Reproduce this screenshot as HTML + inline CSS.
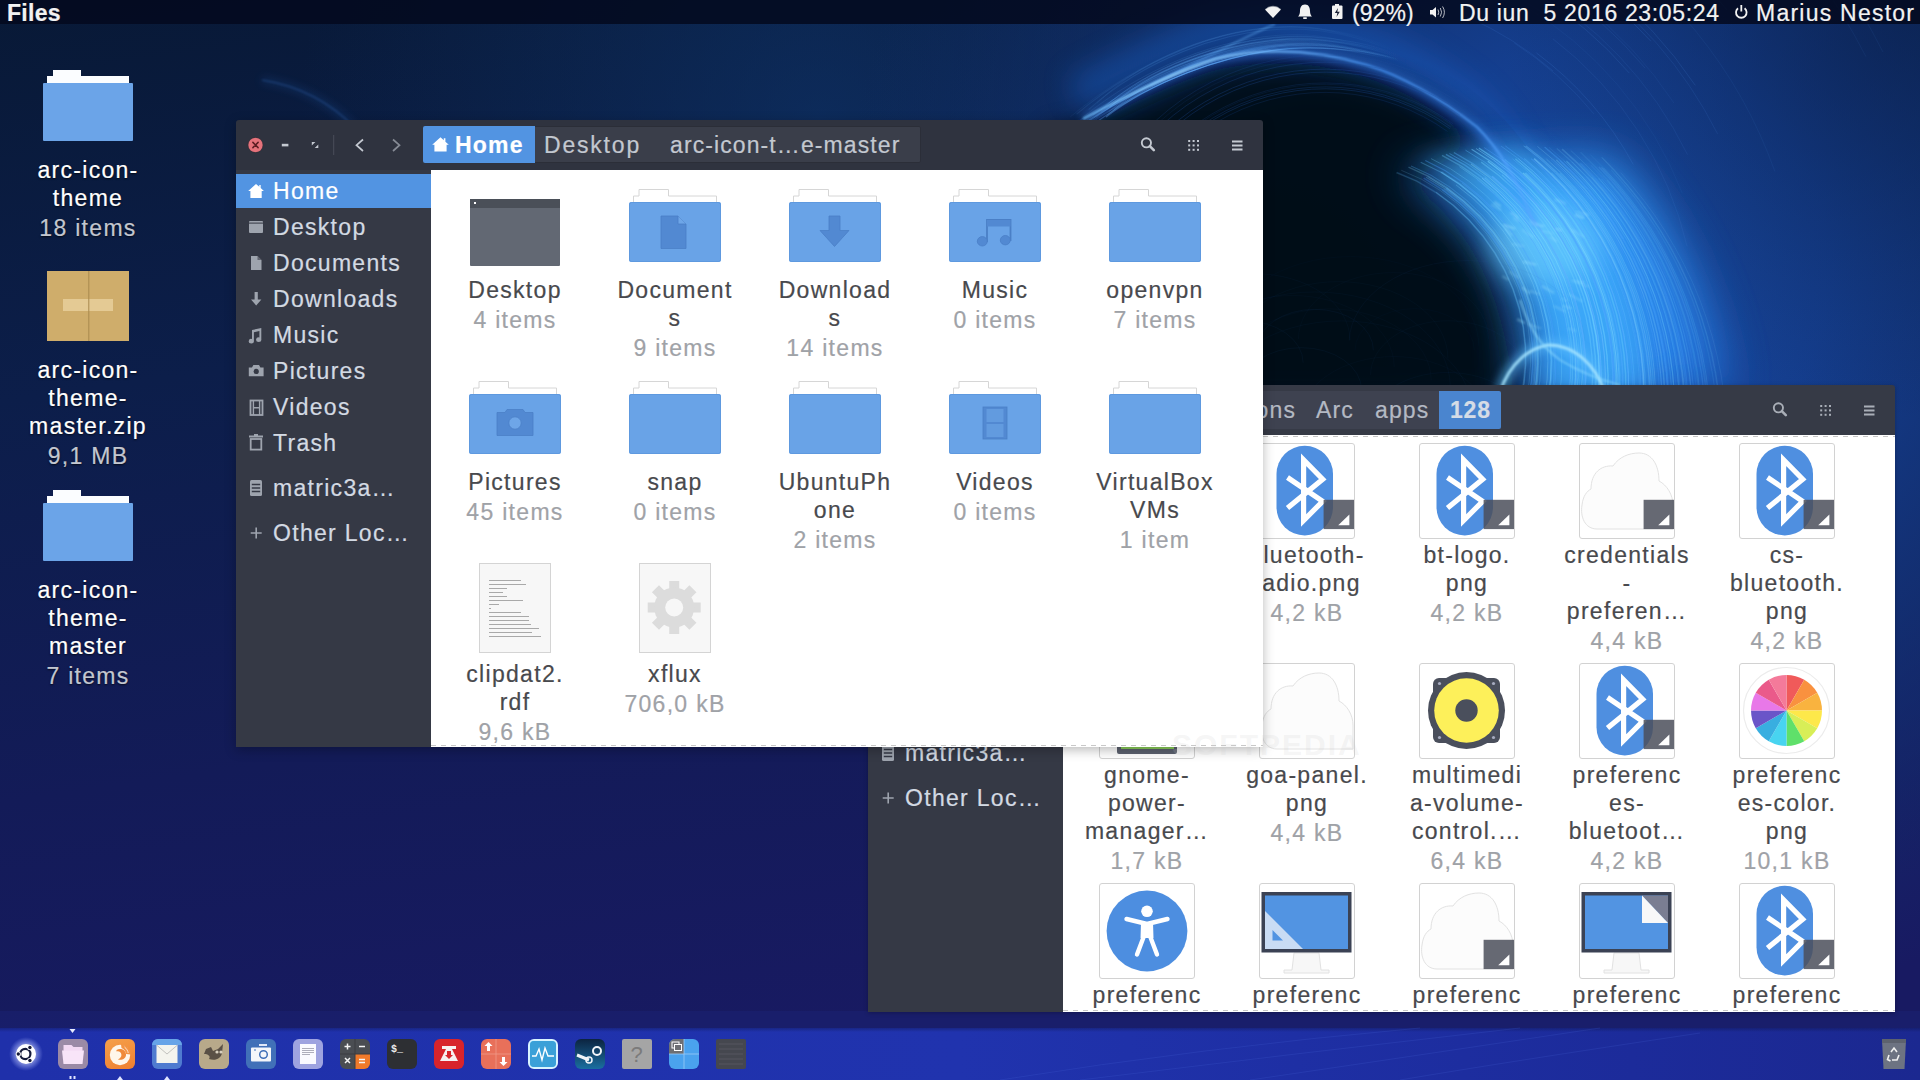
<!DOCTYPE html><html><head><meta charset="utf-8"><title>Files</title><style>
*{margin:0;padding:0;box-sizing:border-box}
html,body{width:1920px;height:1080px;overflow:hidden;background:#0e1d4a;font-family:"Liberation Sans",sans-serif}
.lbl,.si,.dl,.pt,#panel div{-webkit-text-stroke:0.2px currentColor}
.a{position:absolute}
svg.a{overflow:visible}
#panel{left:0;top:0;width:1920px;height:24px;background:rgba(3,9,30,0.86);color:#f2f2f2;font-size:23px;line-height:26px;white-space:nowrap}
.win{position:absolute;overflow:hidden;border-radius:3px 3px 0 0}
.hdr{position:absolute;left:0;top:0;width:100%;height:50px;background:#2f333f}
.side{position:absolute;left:0;top:50px;width:195px;bottom:0;background:#353945}
.cont{position:absolute;left:195px;top:50px;right:0;bottom:0;background:#ffffff;overflow:hidden}
.si{position:absolute;left:0;width:195px;height:34px;color:#d3dae3;font-size:23px;line-height:34px;letter-spacing:1.3px;white-space:nowrap}
.si .t{position:absolute;left:37px;top:0}
.si.sel{background:#5294e2;color:#fff}
.lbl{position:absolute;width:160px;text-align:center;font-size:23px;line-height:28px;letter-spacing:1.3px;color:#48494d;white-space:nowrap}
.cnt{color:#9fa2a7}
.dl{position:absolute;width:176px;text-align:center;font-size:23px;line-height:28px;letter-spacing:1.3px;color:#ffffff;white-space:nowrap;text-shadow:0 1px 2px rgba(0,0,0,.7)}
.dl .cnt{color:#c3c7d0}
.pt{position:absolute;top:6px;line-height:38px;font-size:23px;letter-spacing:1.1px;white-space:nowrap}
.di{position:absolute;top:1039px;width:30px;height:30px;border-radius:6px;overflow:hidden}
</style></head><body><svg class="a" style="left:0;top:0" width="1920" height="1080" viewBox="0 0 1920 1080">
<defs>
<linearGradient id="bg" x1="0" y1="0" x2="0.25" y2="1">
<stop offset="0" stop-color="#081936"/><stop offset="0.35" stop-color="#0c1e4a"/><stop offset="0.7" stop-color="#131b58"/><stop offset="1" stop-color="#181a62"/>
</linearGradient>
<radialGradient id="rg" cx="1600" cy="270" r="760" gradientUnits="userSpaceOnUse">
<stop offset="0" stop-color="#1a4ca4" stop-opacity="1"/><stop offset="0.3" stop-color="#154092" stop-opacity="0.95"/><stop offset="0.6" stop-color="#12367a" stop-opacity="0.7"/><stop offset="1" stop-color="#12306e" stop-opacity="0"/>
</radialGradient>
<radialGradient id="tl" cx="820" cy="120" r="520" gradientUnits="userSpaceOnUse">
<stop offset="0" stop-color="#0e3368" stop-opacity="0.65"/><stop offset="1" stop-color="#0e3060" stop-opacity="0"/>
</radialGradient>
<radialGradient id="dk" cx="1330" cy="310" r="265" gradientUnits="userSpaceOnUse">
<stop offset="0" stop-color="#01030b" stop-opacity="1"/><stop offset="0.75" stop-color="#020817" stop-opacity="0.96"/><stop offset="1" stop-color="#05102c" stop-opacity="0"/>
</radialGradient>
<linearGradient id="cr" x1="1420" y1="160" x2="1720" y2="390" gradientUnits="userSpaceOnUse">
<stop offset="0" stop-color="#2a80ea"/><stop offset="0.35" stop-color="#36a2ff"/><stop offset="1" stop-color="#2476e0"/>
</linearGradient>
<linearGradient id="rimg" x1="1080" y1="0" x2="1540" y2="0" gradientUnits="userSpaceOnUse">
<stop offset="0" stop-color="#6ec0ff" stop-opacity="0.9"/><stop offset="0.2" stop-color="#9ad8ff" stop-opacity="1"/><stop offset="0.65" stop-color="#4a9aff" stop-opacity="0.75"/><stop offset="1" stop-color="#5aaaff" stop-opacity="0.7"/>
</linearGradient>
<linearGradient id="lbg" x1="1060" y1="0" x2="1400" y2="0" gradientUnits="userSpaceOnUse"><stop offset="0" stop-color="#6ab8ff" stop-opacity="0.6"/><stop offset="0.4" stop-color="#6ab8ff" stop-opacity="1"/><stop offset="1" stop-color="#6ab8ff" stop-opacity="0"/></linearGradient>
<radialGradient id="trd" cx="1920" cy="0" r="420" gradientUnits="userSpaceOnUse"><stop offset="0" stop-color="#0a1f4a" stop-opacity="0.7"/><stop offset="1" stop-color="#0a1f4a" stop-opacity="0"/></radialGradient>
<filter id="b24" x="-50%" y="-50%" width="200%" height="200%"><feGaussianBlur stdDeviation="24"/></filter>
<filter id="b14" x="-50%" y="-50%" width="200%" height="200%"><feGaussianBlur stdDeviation="14"/></filter>
<filter id="b8" x="-50%" y="-50%" width="200%" height="200%"><feGaussianBlur stdDeviation="8"/></filter>
<filter id="b4" x="-50%" y="-50%" width="200%" height="200%"><feGaussianBlur stdDeviation="4"/></filter>
<filter id="b1" x="-50%" y="-50%" width="200%" height="200%"><feGaussianBlur stdDeviation="0.8"/></filter>
</defs>
<rect width="1920" height="1080" fill="url(#bg)"/>
<rect width="1920" height="1080" fill="url(#tl)"/>
<rect width="1920" height="1080" fill="url(#rg)"/>
<rect width="1920" height="1080" fill="url(#trd)"/>
<ellipse cx="1325" cy="315" rx="255" ry="275" fill="url(#dk)" opacity="0.8"/>
<path d="M1075 132 C1130 104 1175 82 1215 70 C1260 60 1310 60 1362 76 C1400 88 1440 110 1470 140 C1455 160 1430 170 1405 180 C1475 225 1505 300 1515 400 L1050 400 L1050 132 Z" fill="#020817" opacity="0.9" filter="url(#b14)"/>
<path d="M1083 119 C1130 94 1175 72 1215 59 C1260 48 1310 48 1367 65 C1405 77 1440 98 1477 127 C1500 150 1515 175 1535 226" fill="none" stroke="#1f64cc" stroke-width="36" opacity="0.42" filter="url(#b14)" transform="translate(-8,-24)"/><path d="M1094.2 117.6 C1147.1 76.3 1220.0 46.3 1290.0 42.2 C1330.0 40.2 1352.9 49.1 1400.0 59.1" fill="none" stroke="url(#lbg)" stroke-width="0.98" opacity="0.25"/><path d="M1085.0 121.4 C1146.7 75.1 1220.0 45.0 1290.0 41.2 C1330.0 39.3 1351.5 48.5 1400.0 58.7" fill="none" stroke="url(#lbg)" stroke-width="0.90" opacity="0.23"/><path d="M1084.4 127.4 C1149.4 83.1 1220.0 53.9 1290.0 48.3 C1330.0 45.5 1383.1 53.0 1400.0 61.4" fill="none" stroke="url(#lbg)" stroke-width="0.69" opacity="0.29"/><path d="M1113.5 109.9 C1148.0 79.0 1220.0 49.3 1290.0 44.6 C1330.0 42.3 1373.1 50.7 1400.0 60.0" fill="none" stroke="url(#lbg)" stroke-width="0.88" opacity="0.36"/><path d="M1096.9 103.5 C1141.2 58.6 1220.0 26.7 1290.0 26.6 C1330.0 26.5 1361.6 39.4 1400.0 53.2" fill="none" stroke="url(#lbg)" stroke-width="0.70" opacity="0.12"/><path d="M1107.2 115.1 C1148.9 81.8 1220.0 52.5 1290.0 47.2 C1330.0 44.5 1357.2 52.2 1400.0 60.9" fill="none" stroke="url(#lbg)" stroke-width="1.01" opacity="0.33"/><path d="M1083.3 116.9 C1144.2 67.7 1220.0 36.8 1290.0 34.7 C1330.0 33.6 1352.5 44.4 1400.0 56.2" fill="none" stroke="url(#lbg)" stroke-width="0.64" opacity="0.21"/><path d="M1082.6 125.7 C1148.1 79.4 1220.0 49.8 1290.0 45.1 C1330.0 42.7 1362.6 50.9 1400.0 60.1" fill="none" stroke="url(#lbg)" stroke-width="1.01" opacity="0.38"/><path d="M1100.9 111.7 C1145.9 72.8 1220.0 42.4 1290.0 39.1 C1330.0 37.5 1378.0 47.2 1400.0 57.9" fill="none" stroke="url(#lbg)" stroke-width="0.77" opacity="0.25"/><path d="M1103.9 107.9 C1144.8 69.5 1220.0 38.8 1290.0 36.2 C1330.0 34.9 1379.2 45.4 1400.0 56.8" fill="none" stroke="url(#lbg)" stroke-width="0.80" opacity="0.24"/><path d="M1070.4 116.7 C1141.2 58.5 1220.0 26.6 1290.0 26.5 C1330.0 26.4 1380.3 39.3 1400.0 53.2" fill="none" stroke="url(#lbg)" stroke-width="0.71" opacity="0.12"/><path d="M1092.8 115.1 C1145.6 71.8 1220.0 41.3 1290.0 38.3 C1330.0 36.7 1380.6 46.7 1400.0 57.6" fill="none" stroke="url(#lbg)" stroke-width="1.00" opacity="0.21"/><path d="M1088.6 109.6 C1142.1 61.4 1220.0 29.7 1290.0 29.0 C1330.0 28.6 1373.8 40.9 1400.0 54.1" fill="none" stroke="url(#lbg)" stroke-width="1.01" opacity="0.15"/><path d="M1109.8 107.2 C1145.9 72.7 1220.0 42.3 1290.0 39.1 C1330.0 37.4 1369.0 47.2 1400.0 57.9" fill="none" stroke="url(#lbg)" stroke-width="1.06" opacity="0.32"/><path d="M1097.9 120.9 C1149.5 83.4 1220.0 54.2 1290.0 48.5 C1330.0 45.7 1389.7 53.1 1400.0 61.5" fill="none" stroke="url(#lbg)" stroke-width="1.18" opacity="0.43"/><path d="M1095.9 117.5 C1147.4 77.3 1220.0 47.5 1290.0 43.2 C1330.0 41.0 1350.9 49.7 1400.0 59.4" fill="none" stroke="url(#lbg)" stroke-width="0.92" opacity="0.30"/><path d="M1061.0 137.2 C1148.5 80.5 1220.0 51.0 1290.0 46.0 C1330.0 43.5 1380.7 51.5 1400.0 60.5" fill="none" stroke="url(#lbg)" stroke-width="0.69" opacity="0.28"/><path d="M1108.6 111.9 C1147.8 78.3 1220.0 48.6 1290.0 44.1 C1330.0 41.8 1353.2 50.3 1400.0 59.8" fill="none" stroke="url(#lbg)" stroke-width="0.91" opacity="0.31"/><path d="M1100.9 109.8 C1145.1 70.2 1220.0 39.5 1290.0 36.8 C1330.0 35.5 1384.6 45.8 1400.0 57.1" fill="none" stroke="url(#lbg)" stroke-width="0.79" opacity="0.29"/><path d="M1106.8 109.5 C1146.3 73.8 1220.0 43.5 1290.0 40.0 C1330.0 38.3 1388.3 47.8 1400.0 58.3" fill="none" stroke="url(#lbg)" stroke-width="0.71" opacity="0.26"/><path d="M1071.4 131.9 C1148.4 80.2 1220.0 50.7 1290.0 45.8 C1330.0 43.3 1369.4 51.4 1400.0 60.4" fill="none" stroke="url(#lbg)" stroke-width="1.01" opacity="0.30"/><path d="M1081.2 125.3 C1147.6 77.9 1220.0 48.1 1290.0 43.7 C1330.0 41.5 1364.8 50.1 1400.0 59.6" fill="none" stroke="url(#lbg)" stroke-width="1.00" opacity="0.24"/><path d="M1076.6 114.1 C1141.4 59.3 1220.0 27.4 1290.0 27.1 C1330.0 27.0 1374.7 39.7 1400.0 53.4" fill="none" stroke="url(#lbg)" stroke-width="1.07" opacity="0.14"/><path d="M1106.0 117.0 C1149.5 83.5 1220.0 54.4 1290.0 48.7 C1330.0 45.9 1385.0 53.2 1400.0 61.5" fill="none" stroke="url(#lbg)" stroke-width="1.16" opacity="0.48"/><path d="M1060.3 133.2 C1146.5 74.4 1220.0 44.2 1290.0 40.6 C1330.0 38.8 1375.4 48.1 1400.0 58.5" fill="none" stroke="url(#lbg)" stroke-width="0.64" opacity="0.28"/><path d="M1068.7 135.3 C1149.4 83.2 1220.0 54.0 1290.0 48.4 C1330.0 45.6 1363.6 53.0 1400.0 61.4" fill="none" stroke="url(#lbg)" stroke-width="0.64" opacity="0.32"/><path d="M1150 86 C1190 66 1230 44 1275 24" fill="none" stroke="#6ab8ff" stroke-width="1.5" opacity="0.55" filter="url(#b1)"/><path d="M1609.4 159.5 L1620.5 171.3 L1631.2 183.6 L1641.6 196.2 L1651.4 209.3 L1660.7 222.7 L1669.5 236.6 L1677.8 250.8 L1685.5 265.4 L1692.7 280.3 L1699.2 295.6 L1705.1 311.1 L1710.4 326.9 L1715.1 343.0 L1719.1 359.2 L1722.4 375.7 L1725.0 392.4 L1520.0 400.0 L1520.0 400.0 L1523.1 384.9 L1524.8 369.2 L1525.2 353.0 L1524.1 336.6 L1521.5 320.0 L1517.4 303.4 L1511.8 287.0 L1504.6 270.9 L1495.9 255.2 L1485.6 240.2 L1474.0 225.9 L1460.9 212.6 L1446.5 200.4 L1430.8 189.4 L1414.1 180.1 L1396.3 172.7 Z" fill="url(#cr)" filter="url(#b24)" opacity="0.95"/><path d="M1520.9 145.8 L1535.4 157.0 L1549.1 169.2 L1562.0 182.1 L1574.2 195.8 L1585.4 210.1 L1595.8 225.0 L1605.3 240.5 L1613.8 256.4 L1621.4 272.7 L1628.1 289.4 L1633.7 306.4 L1638.4 323.6 L1642.0 341.0 L1644.7 358.5 L1646.4 376.0 L1647.0 393.6 L1544.5 398.4 L1546.8 382.4 L1547.8 365.9 L1547.5 349.2 L1545.8 332.3 L1542.7 315.4 L1538.1 298.5 L1532.1 281.8 L1524.6 265.4 L1515.8 249.5 L1505.5 234.2 L1493.9 219.6 L1481.0 205.9 L1466.8 193.2 L1451.5 181.8 L1435.0 171.7 L1417.6 163.4 Z" fill="#45b8ff" filter="url(#b14)" opacity="0.6"/><ellipse cx="1545" cy="245" rx="55" ry="40" fill="#7fdcff" filter="url(#b14)" opacity="0.45"/><path d="M1396.3 172.7 L1416.6 181.3 L1435.5 192.4 L1452.8 205.4 L1468.6 220.0 L1482.5 236.0 L1494.5 253.0 L1504.6 270.9 L1512.7 289.3 L1518.8 308.2 L1522.9 327.1 L1525.0 346.0 L1525.1 364.6 L1523.4 382.7 L1520.0 400.0" fill="none" stroke="#8fe0ff" stroke-width="1.15" opacity="0.17"/><path d="M1408.5 167.1 L1428.6 176.3 L1447.3 187.8 L1464.5 201.2 L1480.1 216.1 L1494.0 232.3 L1506.1 249.5 L1516.3 267.5 L1524.5 286.2 L1530.9 305.2 L1535.3 324.4 L1537.8 343.6 L1538.4 362.5 L1537.3 381.1 L1534.3 399.0" fill="none" stroke="#8fe0ff" stroke-width="1.46" opacity="0.23"/><path d="M1533.6 158.6 L1549.2 172.7 L1563.8 187.7 L1577.2 203.7 L1589.6 220.6 L1600.7 238.1 L1610.6 256.3 L1619.2 275.0 L1626.5 294.2 L1632.5 313.8 L1637.2 333.6 L1640.6 353.6 L1642.6 373.6 L1643.4 393.7" fill="none" stroke="#4aa0ff" stroke-width="1.49" opacity="0.25"/><path d="M1504.8 159.4 L1521.4 173.0 L1536.8 187.9 L1551.0 203.8 L1563.9 220.7 L1575.4 238.3 L1585.6 256.7 L1594.2 275.6 L1601.5 295.0 L1607.2 314.8 L1611.5 334.7 L1614.3 354.8 L1615.6 374.8 L1615.4 394.7" fill="none" stroke="#6fd0ff" stroke-width="1.27" opacity="0.32"/><path d="M1563.7 160.7 L1578.2 175.0 L1591.8 190.1 L1604.5 206.0 L1616.1 222.6 L1626.7 239.9 L1636.3 257.7 L1644.8 276.1 L1652.2 294.8 L1658.4 314.0 L1663.5 333.5 L1667.4 353.2 L1670.1 373.0 L1671.7 393.0" fill="none" stroke="#6fd0ff" stroke-width="0.78" opacity="0.22"/><path d="M1611.2 169.9 L1623.8 184.1 L1635.8 198.9 L1647.0 214.3 L1657.6 230.2 L1667.4 246.6 L1676.4 263.5 L1684.6 280.9 L1691.9 298.6 L1698.4 316.8 L1703.9 335.3 L1708.6 354.1 L1712.4 373.2 L1715.2 392.4" fill="none" stroke="#6fd0ff" stroke-width="1.28" opacity="0.10"/><path d="M1470.9 164.0 L1488.6 176.9 L1504.9 191.3 L1519.9 206.9 L1533.3 223.6 L1545.2 241.2 L1555.5 259.6 L1564.1 278.5 L1571.1 297.9 L1576.4 317.6 L1580.0 337.5 L1581.9 357.3 L1582.3 376.9 L1581.0 396.3" fill="none" stroke="#8fe0ff" stroke-width="1.07" opacity="0.33"/><path d="M1601.3 167.4 L1614.3 181.7 L1626.6 196.6 L1638.2 212.1 L1649.0 228.2 L1658.9 244.8 L1668.1 261.9 L1676.3 279.5 L1683.7 297.6 L1690.1 316.0 L1695.6 334.7 L1700.1 353.8 L1703.6 373.0 L1706.2 392.5" fill="none" stroke="#8fe0ff" stroke-width="1.17" opacity="0.10"/><path d="M1551.5 172.7 L1566.0 187.8 L1579.4 203.8 L1591.6 220.7 L1602.7 238.2 L1612.6 256.4 L1621.2 275.1 L1628.5 294.2 L1634.6 313.7 L1639.3 333.5 L1642.7 353.5 L1644.8 373.6 L1645.6 393.6" fill="none" stroke="#58b8ff" stroke-width="1.33" opacity="0.33"/><path d="M1594.9 177.6 L1607.9 192.6 L1620.1 208.4 L1631.3 224.8 L1641.6 241.8 L1651.0 259.3 L1659.4 277.4 L1666.8 295.8 L1673.1 314.7 L1678.4 333.9 L1682.6 353.3 L1685.7 372.9 L1687.7 392.7" fill="none" stroke="#4aa0ff" stroke-width="0.92" opacity="0.14"/><path d="M1401.3 170.3 L1421.5 179.2 L1440.3 190.5 L1457.6 203.6 L1473.3 218.4 L1487.2 234.4 L1499.2 251.5 L1509.4 269.4 L1517.6 288.0 L1523.7 306.9 L1528.0 326.0 L1530.2 345.0 L1530.6 363.7 L1529.1 382.0 L1525.9 399.6" fill="none" stroke="#8fe0ff" stroke-width="0.77" opacity="0.20"/><path d="M1534.2 158.6 L1549.8 172.7 L1564.3 187.8 L1577.8 203.8 L1590.1 220.6 L1601.2 238.1 L1611.1 256.3 L1619.7 275.0 L1627.0 294.2 L1633.1 313.8 L1637.8 333.6 L1641.2 353.6 L1643.2 373.6 L1644.0 393.7" fill="none" stroke="#8fe0ff" stroke-width="1.46" opacity="0.35"/><path d="M1465.5 150.2 L1484.1 161.7 L1501.4 174.9 L1517.4 189.5 L1532.0 205.3 L1545.3 222.1 L1557.1 239.7 L1567.3 258.1 L1576.0 277.1 L1583.1 296.5 L1588.5 316.3 L1592.4 336.2 L1594.7 356.1 L1595.4 376.0 L1594.6 395.6" fill="none" stroke="#58b8ff" stroke-width="0.90" opacity="0.40"/><path d="M1524.7 172.8 L1540.1 187.7 L1554.2 203.7 L1567.0 220.5 L1578.5 238.2 L1588.6 256.6 L1597.3 275.5 L1604.5 294.9 L1610.3 314.6 L1614.6 334.5 L1617.5 354.6 L1618.9 374.6 L1618.8 394.6" fill="none" stroke="#6fd0ff" stroke-width="1.03" opacity="0.42"/><path d="M1559.8 173.2 L1574.0 188.3 L1587.2 204.3 L1599.2 221.1 L1610.2 238.5 L1620.0 256.6 L1628.5 275.2 L1635.9 294.3 L1642.0 313.7 L1646.9 333.4 L1650.4 353.3 L1652.7 373.4 L1653.8 393.4" fill="none" stroke="#6fd0ff" stroke-width="1.42" opacity="0.22"/><path d="M1587.2 176.3 L1600.5 191.4 L1612.8 207.2 L1624.3 223.7 L1634.7 240.8 L1644.2 258.5 L1652.6 276.7 L1660.0 295.3 L1666.3 314.3 L1671.5 333.6 L1675.6 353.2 L1678.5 373.0 L1680.3 392.8" fill="none" stroke="#58b8ff" stroke-width="0.99" opacity="0.17"/><path d="M1524.5 145.8 L1540.8 158.8 L1556.2 173.0 L1570.5 188.1 L1583.8 204.1 L1596.0 220.9 L1607.0 238.4 L1616.8 256.5 L1625.4 275.1 L1632.7 294.2 L1638.8 313.7 L1643.6 333.5 L1647.1 353.4 L1649.3 373.4 L1650.3 393.5" fill="none" stroke="#4aa0ff" stroke-width="1.02" opacity="0.34"/><path d="M1549.0 147.4 L1564.4 160.8 L1578.9 175.1 L1592.4 190.2 L1605.1 206.1 L1616.7 222.7 L1627.3 240.0 L1636.9 257.8 L1645.4 276.1 L1652.7 294.9 L1659.0 314.0 L1664.1 333.5 L1668.0 353.2 L1670.7 373.0 L1672.3 393.0" fill="none" stroke="#58b8ff" stroke-width="0.62" opacity="0.18"/><path d="M1531.1 158.6 L1546.8 172.6 L1561.5 187.7 L1575.0 203.7 L1587.4 220.5 L1598.5 238.1 L1608.4 256.3 L1617.1 275.0 L1624.4 294.2 L1630.4 313.8 L1635.1 333.6 L1638.4 353.6 L1640.4 373.7 L1641.0 393.8" fill="none" stroke="#4aa0ff" stroke-width="1.19" opacity="0.34"/><path d="M1481.2 162.1 L1498.6 175.3 L1514.7 189.8 L1529.4 205.6 L1542.7 222.3 L1554.5 240.0 L1564.8 258.4 L1573.4 277.4 L1580.5 296.8 L1585.9 316.5 L1589.8 336.4 L1592.0 356.4 L1592.6 376.2 L1591.7 395.7" fill="none" stroke="#6fd0ff" stroke-width="1.32" opacity="0.37"/><path d="M1545.1 147.1 L1560.6 160.4 L1575.3 174.6 L1588.9 189.8 L1601.7 205.7 L1613.4 222.3 L1624.1 239.6 L1633.7 257.5 L1642.2 275.9 L1649.6 294.7 L1655.8 313.9 L1660.8 333.4 L1664.7 353.2 L1667.4 373.1 L1668.8 393.1" fill="none" stroke="#58b8ff" stroke-width="0.99" opacity="0.23"/><path d="M1606.4 179.9 L1619.0 194.8 L1630.8 210.5 L1641.8 226.7 L1651.9 243.5 L1661.1 260.8 L1669.4 278.6 L1676.8 296.8 L1683.2 315.4 L1688.6 334.3 L1693.0 353.5 L1696.3 373.0 L1698.7 392.6" fill="none" stroke="#8fe0ff" stroke-width="0.79" opacity="0.10"/><path d="M1528.5 172.7 L1543.7 187.6 L1557.7 203.6 L1570.5 220.4 L1581.9 238.1 L1592.0 256.4 L1600.6 275.3 L1607.9 294.7 L1613.7 314.4 L1618.1 334.3 L1621.0 354.4 L1622.5 374.4 L1622.6 394.4" fill="none" stroke="#4aa0ff" stroke-width="1.35" opacity="0.35"/><path d="M1445.7 188.4 L1462.9 201.7 L1478.5 216.6 L1492.4 232.7 L1504.5 249.9 L1514.7 267.9 L1522.9 286.6 L1529.3 305.6 L1533.6 324.7 L1536.1 343.9 L1536.6 362.8 L1535.4 381.3 L1532.4 399.2" fill="none" stroke="#4aa0ff" stroke-width="1.34" opacity="0.27"/><path d="M1580.5 152.3 L1594.5 165.9 L1607.8 180.2 L1620.3 195.1 L1632.1 210.7 L1643.0 226.9 L1653.1 243.7 L1662.3 261.0 L1670.6 278.7 L1678.0 296.9 L1684.4 315.5 L1689.8 334.4 L1694.2 353.6 L1697.6 373.0 L1700.0 392.5" fill="none" stroke="#6fd0ff" stroke-width="1.39" opacity="0.10"/><path d="M1571.7 161.8 L1585.9 176.1 L1599.3 191.2 L1611.7 207.0 L1623.1 223.5 L1633.6 240.7 L1643.1 258.4 L1651.5 276.6 L1658.9 295.3 L1665.2 314.3 L1670.4 333.6 L1674.4 353.2 L1677.3 373.0 L1679.1 392.8" fill="none" stroke="#58b8ff" stroke-width="0.76" opacity="0.19"/><path d="M1522.9 172.9 L1538.3 187.8 L1552.4 203.7 L1565.3 220.6 L1576.8 238.3 L1586.9 256.6 L1595.6 275.6 L1602.8 295.0 L1608.6 314.7 L1612.9 334.6 L1615.7 354.7 L1617.0 374.7 L1616.9 394.6" fill="none" stroke="#8fe0ff" stroke-width="1.21" opacity="0.42"/><path d="M1518.3 158.7 L1534.5 172.5 L1549.5 187.5 L1563.4 203.5 L1576.0 220.4 L1587.3 238.0 L1597.4 256.3 L1606.0 275.2 L1613.3 294.5 L1619.2 314.1 L1623.7 334.0 L1626.8 354.1 L1628.4 374.2 L1628.7 394.2" fill="none" stroke="#6fd0ff" stroke-width="0.82" opacity="0.41"/><path d="M1484.6 177.6 L1501.0 191.9 L1516.0 207.5 L1529.5 224.2 L1541.5 241.8 L1551.7 260.1 L1560.4 279.1 L1567.3 298.5 L1572.5 318.1 L1576.0 337.9 L1577.9 357.7 L1578.1 377.2 L1576.6 396.5" fill="none" stroke="#6fd0ff" stroke-width="1.28" opacity="0.40"/><path d="M1602.2 167.7 L1615.2 181.9 L1627.5 196.8 L1639.0 212.3 L1649.8 228.3 L1659.7 245.0 L1668.9 262.1 L1677.1 279.7 L1684.4 297.7 L1690.9 316.1 L1696.4 334.8 L1700.9 353.8 L1704.5 373.0 L1707.1 392.5" fill="none" stroke="#58b8ff" stroke-width="1.22" opacity="0.10"/><path d="M1501.9 159.6 L1518.7 173.2 L1534.2 188.0 L1548.4 203.9 L1561.4 220.8 L1572.9 238.5 L1583.1 256.8 L1591.8 275.8 L1599.0 295.2 L1604.7 314.9 L1608.9 334.9 L1611.6 354.9 L1612.8 374.9 L1612.6 394.8" fill="none" stroke="#58b8ff" stroke-width="1.23" opacity="0.42"/><path d="M1607.4 180.1 L1620.0 195.1 L1631.8 210.7 L1642.7 226.9 L1652.8 243.6 L1662.0 260.9 L1670.3 278.7 L1677.7 296.9 L1684.1 315.5 L1689.5 334.4 L1693.9 353.6 L1697.3 373.0 L1699.7 392.5" fill="none" stroke="#58b8ff" stroke-width="1.36" opacity="0.10"/><path d="M1420.7 162.2 L1440.5 172.0 L1459.0 184.0 L1476.0 197.7 L1491.4 212.8 L1505.2 229.2 L1517.3 246.5 L1527.6 264.7 L1536.0 283.5 L1542.5 302.7 L1547.3 322.1 L1550.1 341.5 L1551.2 360.8 L1550.4 379.7 L1548.0 398.1" fill="none" stroke="#6fd0ff" stroke-width="1.20" opacity="0.29"/><path d="M1478.9 148.1 L1497.0 160.1 L1513.9 173.6 L1529.5 188.3 L1543.9 204.2 L1556.9 221.1 L1568.6 238.7 L1578.7 257.1 L1587.4 276.1 L1594.6 295.5 L1600.3 315.2 L1604.4 335.2 L1607.0 355.2 L1608.1 375.2 L1607.7 395.0" fill="none" stroke="#6fd0ff" stroke-width="1.41" opacity="0.39"/><path d="M1462.1 183.1 L1479.0 196.9 L1494.4 212.0 L1508.2 228.5 L1520.2 245.9 L1530.5 264.1 L1539.0 282.9 L1545.6 302.1 L1550.4 321.5 L1553.3 341.0 L1554.5 360.3 L1553.9 379.4 L1551.6 397.9" fill="none" stroke="#58b8ff" stroke-width="0.83" opacity="0.33"/><path d="M1440.6 172.0 L1459.0 184.0 L1476.0 197.7 L1491.5 212.8 L1505.3 229.2 L1517.3 246.5 L1527.6 264.7 L1536.0 283.5 L1542.6 302.7 L1547.3 322.1 L1550.1 341.5 L1551.2 360.8 L1550.5 379.7 L1548.0 398.1" fill="none" stroke="#6fd0ff" stroke-width="0.96" opacity="0.32"/><path d="M1525.7 172.8 L1541.0 187.7 L1555.1 203.6 L1567.9 220.5 L1579.3 238.2 L1589.4 256.5 L1598.1 275.4 L1605.4 294.8 L1611.1 314.5 L1615.5 334.5 L1618.4 354.5 L1619.8 374.6 L1619.8 394.5" fill="none" stroke="#58b8ff" stroke-width="1.24" opacity="0.46"/><path d="M1620.7 172.7 L1632.9 186.8 L1644.6 201.4 L1655.6 216.6 L1665.9 232.3 L1675.5 248.5 L1684.4 265.2 L1692.5 282.3 L1699.8 299.8 L1706.3 317.7 L1712.0 336.0 L1716.8 354.5 L1720.8 373.3 L1723.8 392.4" fill="none" stroke="#8fe0ff" stroke-width="0.89" opacity="0.10"/><path d="M1544.1 147.0 L1559.7 160.3 L1574.4 174.5 L1588.1 189.7 L1600.8 205.6 L1612.6 222.2 L1623.3 239.5 L1632.9 257.4 L1641.4 275.8 L1648.8 294.7 L1655.0 313.9 L1660.0 333.4 L1663.9 353.2 L1666.5 373.1 L1668.0 393.1" fill="none" stroke="#4aa0ff" stroke-width="1.23" opacity="0.22"/><path d="M1488.0 161.1 L1505.2 174.4 L1521.1 189.1 L1535.7 204.9 L1548.9 221.7 L1560.6 239.4 L1570.8 257.8 L1579.5 276.8 L1586.6 296.2 L1592.2 315.9 L1596.1 335.9 L1598.5 355.8 L1599.4 375.7 L1598.7 395.4" fill="none" stroke="#6fd0ff" stroke-width="0.70" opacity="0.42"/><path d="M1590.1 154.4 L1603.6 168.0 L1616.5 182.2 L1628.8 197.1 L1640.3 212.6 L1651.0 228.6 L1660.9 245.2 L1670.0 262.3 L1678.2 279.8 L1685.6 297.8 L1692.0 316.2 L1697.5 334.9 L1702.1 353.8 L1705.7 373.1 L1708.3 392.5" fill="none" stroke="#6fd0ff" stroke-width="0.84" opacity="0.10"/><path d="M1442.1 189.8 L1459.4 203.0 L1475.0 217.8 L1488.9 233.8 L1501.0 251.0 L1511.1 268.9 L1519.3 287.5 L1525.6 306.4 L1529.8 325.6 L1532.2 344.6 L1532.6 363.4 L1531.2 381.7 L1528.1 399.5" fill="none" stroke="#58b8ff" stroke-width="1.34" opacity="0.20"/><path d="M1601.6 178.9 L1614.4 193.9 L1626.3 209.6 L1637.4 225.9 L1647.6 242.7 L1656.9 260.1 L1665.3 278.0 L1672.6 296.4 L1679.0 315.1 L1684.3 334.1 L1688.7 353.4 L1691.9 372.9 L1694.1 392.6" fill="none" stroke="#4aa0ff" stroke-width="0.73" opacity="0.13"/><path d="M1603.8 168.0 L1616.7 182.3 L1628.9 197.1 L1640.4 212.6 L1651.1 228.6 L1661.0 245.2 L1670.1 262.3 L1678.4 279.9 L1685.7 297.8 L1692.1 316.2 L1697.7 334.9 L1702.2 353.8 L1705.8 373.1 L1708.4 392.5" fill="none" stroke="#6fd0ff" stroke-width="0.85" opacity="0.10"/><path d="M1562.1 149.1 L1576.9 162.6 L1590.9 176.9 L1604.0 192.0 L1616.3 207.7 L1627.6 224.2 L1638.0 241.3 L1647.5 258.9 L1655.9 277.0 L1663.2 295.6 L1669.6 314.5 L1674.8 333.7 L1678.9 353.2 L1682.0 372.9 L1683.9 392.8" fill="none" stroke="#8fe0ff" stroke-width="1.44" opacity="0.18"/><path d="M1555.9 173.0 L1570.2 188.1 L1583.5 204.1 L1595.7 220.9 L1606.7 238.4 L1616.5 256.5 L1625.1 275.1 L1632.5 294.2 L1638.5 313.7 L1643.3 333.5 L1646.8 353.4 L1649.0 373.5 L1650.0 393.5" fill="none" stroke="#58b8ff" stroke-width="0.66" opacity="0.23"/><path d="M1591.0 165.2 L1604.5 179.5 L1617.1 194.4 L1629.0 210.1 L1640.0 226.3 L1650.2 243.2 L1659.4 260.5 L1667.7 278.4 L1675.1 296.6 L1681.5 315.3 L1686.9 334.2 L1691.2 353.5 L1694.6 372.9 L1696.8 392.6" fill="none" stroke="#4aa0ff" stroke-width="1.43" opacity="0.11"/><path d="M1445.9 154.4 L1465.0 165.2 L1482.9 178.0 L1499.4 192.2 L1514.4 207.8 L1527.9 224.4 L1539.9 242.0 L1550.2 260.4 L1558.8 279.3 L1565.7 298.7 L1570.9 318.3 L1574.4 338.1 L1576.1 357.8 L1576.3 377.4 L1574.8 396.6" fill="none" stroke="#58b8ff" stroke-width="1.44" opacity="0.40"/><path d="M1602.1 157.4 L1615.1 171.0 L1627.5 185.2 L1639.4 199.9 L1650.5 215.2 L1661.0 231.0 L1670.7 247.3 L1679.7 264.2 L1687.8 281.4 L1695.1 299.1 L1701.6 317.2 L1707.2 335.6 L1712.0 354.3 L1715.8 373.2 L1718.7 392.4" fill="none" stroke="#8fe0ff" stroke-width="1.17" opacity="0.10"/><path d="M1501.1 146.1 L1518.4 158.7 L1534.6 172.5 L1549.6 187.5 L1563.5 203.5 L1576.1 220.4 L1587.4 238.0 L1597.4 256.3 L1606.1 275.2 L1613.4 294.5 L1619.3 314.1 L1623.8 334.0 L1626.8 354.1 L1628.5 374.2 L1628.8 394.2" fill="none" stroke="#58b8ff" stroke-width="0.84" opacity="0.35"/><path d="M1591.8 177.0 L1604.9 192.1 L1617.1 207.9 L1628.4 224.3 L1638.8 241.4 L1648.2 259.0 L1656.6 277.1 L1664.0 295.6 L1670.3 314.5 L1675.6 333.8 L1679.7 353.3 L1682.8 372.9 L1684.7 392.8" fill="none" stroke="#6fd0ff" stroke-width="1.26" opacity="0.14"/><path d="M1505.5 145.9 L1522.6 158.6 L1538.6 172.5 L1553.6 187.5 L1567.3 203.5 L1579.8 220.4 L1591.1 238.0 L1601.1 256.3 L1609.8 275.1 L1617.1 294.4 L1623.0 314.0 L1627.5 333.9 L1630.7 353.9 L1632.5 374.0 L1632.9 394.0" fill="none" stroke="#4aa0ff" stroke-width="0.70" opacity="0.34"/><path d="M1581.2 163.3 L1595.0 177.6 L1608.0 192.7 L1620.2 208.4 L1631.4 224.8 L1641.7 241.8 L1651.1 259.3 L1659.5 277.4 L1666.9 295.9 L1673.2 314.7 L1678.5 333.9 L1682.7 353.3 L1685.8 372.9 L1687.8 392.7" fill="none" stroke="#4aa0ff" stroke-width="1.47" opacity="0.15"/><path d="M1453.9 152.5 L1472.8 163.6 L1490.4 176.6 L1506.7 191.0 L1521.6 206.6 L1535.0 223.3 L1546.9 241.0 L1557.2 259.3 L1565.8 278.3 L1572.8 297.7 L1578.1 317.4 L1581.8 337.3 L1583.8 357.1 L1584.2 376.8 L1583.0 396.2" fill="none" stroke="#58b8ff" stroke-width="1.35" opacity="0.36"/><path d="M1556.3 159.9 L1571.1 174.2 L1584.9 189.3 L1597.8 205.3 L1609.6 221.9 L1620.3 239.3 L1630.0 257.2 L1638.5 275.7 L1645.9 294.6 L1652.1 313.8 L1657.1 333.4 L1660.9 353.2 L1663.4 373.1 L1664.8 393.1" fill="none" stroke="#8fe0ff" stroke-width="1.48" opacity="0.22"/><path d="M1570.8 150.5 L1585.3 164.0 L1598.9 178.3 L1611.8 193.4 L1623.8 209.1 L1635.0 225.4 L1645.2 242.3 L1654.5 259.8 L1662.9 277.8 L1670.3 296.2 L1676.6 314.9 L1681.9 334.0 L1686.2 353.4 L1689.4 372.9 L1691.5 392.6" fill="none" stroke="#8fe0ff" stroke-width="0.99" opacity="0.13"/><path d="M1426.0 177.3 L1444.8 188.8 L1462.0 202.1 L1477.6 216.9 L1491.5 233.0 L1503.6 250.2 L1513.8 268.2 L1522.0 286.8 L1528.3 305.8 L1532.7 324.9 L1535.1 344.1 L1535.6 362.9 L1534.3 381.4 L1531.3 399.2" fill="none" stroke="#8fe0ff" stroke-width="1.14" opacity="0.22"/><path d="M1537.4 146.4 L1553.2 159.7 L1568.1 173.9 L1582.1 189.0 L1595.0 205.0 L1606.9 221.7 L1617.7 239.1 L1627.4 257.0 L1635.9 275.5 L1643.3 294.5 L1649.4 313.8 L1654.4 333.4 L1658.1 353.2 L1660.6 373.2 L1661.9 393.2" fill="none" stroke="#8fe0ff" stroke-width="1.00" opacity="0.21"/><path d="M1482.0 178.2 L1498.5 192.4 L1513.6 207.9 L1527.1 224.6 L1539.1 242.1 L1549.3 260.5 L1558.0 279.4 L1564.9 298.8 L1570.0 318.5 L1573.5 338.2 L1575.3 357.9 L1575.4 377.5 L1573.8 396.6" fill="none" stroke="#8fe0ff" stroke-width="0.82" opacity="0.48"/><path d="M1601.2 157.2 L1614.3 170.8 L1626.8 185.0 L1638.6 199.7 L1649.8 215.0 L1660.3 230.8 L1670.0 247.2 L1679.0 264.0 L1687.1 281.3 L1694.5 299.0 L1701.0 317.1 L1706.6 335.5 L1711.3 354.2 L1715.1 373.2 L1718.0 392.4" fill="none" stroke="#6fd0ff" stroke-width="0.90" opacity="0.10"/><path d="M1411.0 166.0 L1431.0 175.3 L1449.6 187.0 L1466.8 200.5 L1482.4 215.4 L1496.3 231.6 L1508.3 248.9 L1518.5 266.9 L1526.9 285.6 L1533.3 304.6 L1537.7 323.9 L1540.3 343.1 L1541.0 362.2 L1539.9 380.8 L1537.1 398.8" fill="none" stroke="#58b8ff" stroke-width="1.05" opacity="0.27"/><path d="M1397.1 172.3 L1417.4 180.9 L1436.3 192.1 L1453.6 205.1 L1469.3 219.8 L1483.3 235.7 L1495.3 252.8 L1505.4 270.6 L1513.5 289.1 L1519.6 308.0 L1523.7 326.9 L1525.8 345.8 L1526.0 364.4 L1524.4 382.5 L1521.0 400.0" fill="none" stroke="#4aa0ff" stroke-width="1.13" opacity="0.17"/><path d="M1471.6 149.2 L1490.0 160.9 L1507.1 174.2 L1523.0 188.9 L1537.5 204.7 L1550.6 221.5 L1562.3 239.2 L1572.5 257.6 L1581.2 276.6 L1588.4 296.0 L1593.9 315.8 L1597.9 335.7 L1600.4 355.7 L1601.3 375.6 L1600.6 395.3" fill="none" stroke="#6fd0ff" stroke-width="1.13" opacity="0.50"/><path d="M1534.2 172.5 L1549.2 187.5 L1563.1 203.5 L1575.7 220.4 L1587.1 238.0 L1597.1 256.3 L1605.8 275.2 L1613.0 294.5 L1618.9 314.2 L1623.4 334.1 L1626.5 354.1 L1628.1 374.2 L1628.4 394.2" fill="none" stroke="#4aa0ff" stroke-width="1.29" opacity="0.39"/><path d="M1559.4 160.2 L1574.0 174.5 L1587.8 189.6 L1600.5 205.6 L1612.3 222.2 L1623.0 239.5 L1632.6 257.4 L1641.1 275.8 L1648.5 294.7 L1654.7 313.9 L1659.7 333.4 L1663.6 353.2 L1666.2 373.1 L1667.7 393.1" fill="none" stroke="#58b8ff" stroke-width="0.64" opacity="0.20"/><path d="M1598.5 178.3 L1611.4 193.3 L1623.5 209.0 L1634.6 225.4 L1644.9 242.3 L1654.2 259.8 L1662.6 277.7 L1669.9 296.1 L1676.3 314.9 L1681.6 334.0 L1685.9 353.4 L1689.1 372.9 L1691.2 392.7" fill="none" stroke="#58b8ff" stroke-width="1.42" opacity="0.14"/><path d="M1566.5 161.1 L1580.9 175.4 L1594.4 190.5 L1606.9 206.4 L1618.5 222.9 L1629.1 240.2 L1638.7 257.9 L1647.1 276.2 L1654.5 295.0 L1660.8 314.1 L1665.9 333.5 L1669.8 353.2 L1672.6 373.0 L1674.3 392.9" fill="none" stroke="#6fd0ff" stroke-width="1.34" opacity="0.22"/><path d="M1545.4 172.6 L1560.1 187.6 L1573.7 203.6 L1586.1 220.5 L1597.3 238.0 L1607.2 256.3 L1615.8 275.0 L1623.1 294.3 L1629.1 313.8 L1633.8 333.7 L1637.1 353.7 L1639.0 373.8 L1639.6 393.8" fill="none" stroke="#58b8ff" stroke-width="0.68" opacity="0.35"/><path d="M1423.7 178.2 L1442.4 189.6 L1459.7 202.9 L1475.4 217.6 L1489.3 233.7 L1501.4 250.9 L1511.5 268.8 L1519.7 287.4 L1526.0 306.4 L1530.2 325.5 L1532.6 344.5 L1533.0 363.3 L1531.6 381.7 L1528.5 399.4" fill="none" stroke="#4aa0ff" stroke-width="1.35" opacity="0.26"/><path d="M1524.2 158.5 L1540.2 172.5 L1555.0 187.5 L1568.7 203.5 L1581.2 220.4 L1592.5 238.0 L1602.5 256.2 L1611.1 275.1 L1618.4 294.3 L1624.4 314.0 L1628.9 333.8 L1632.1 353.9 L1633.9 374.0 L1634.4 394.0" fill="none" stroke="#58b8ff" stroke-width="1.04" opacity="0.36"/><path d="M1436.0 192.2 L1453.4 205.2 L1469.1 219.9 L1483.0 235.8 L1495.0 252.8 L1505.1 270.7 L1513.2 289.2 L1519.3 308.0 L1523.4 327.0 L1525.5 345.9 L1525.7 364.5 L1524.1 382.6 L1520.6 400.0" fill="none" stroke="#6fd0ff" stroke-width="1.19" opacity="0.21"/><path d="M1446.6 188.1 L1463.8 201.4 L1479.4 216.3 L1493.3 232.5 L1505.4 249.7 L1515.6 267.7 L1523.8 286.3 L1530.2 305.4 L1534.5 324.5 L1537.0 343.7 L1537.6 362.6 L1536.4 381.2 L1533.5 399.1" fill="none" stroke="#6fd0ff" stroke-width="1.36" opacity="0.22"/><path d="M1476.7 179.3 L1493.3 193.4 L1508.5 208.9 L1522.1 225.5 L1534.1 243.0 L1544.4 261.3 L1553.0 280.2 L1559.8 299.6 L1564.9 319.2 L1568.2 338.9 L1569.8 358.5 L1569.7 377.9 L1568.0 397.0" fill="none" stroke="#4aa0ff" stroke-width="1.04" opacity="0.32"/><path d="M1487.7 161.2 L1504.9 174.5 L1520.8 189.1 L1535.4 204.9 L1548.5 221.7 L1560.3 239.4 L1570.5 257.8 L1579.2 276.8 L1586.3 296.2 L1591.8 316.0 L1595.8 335.9 L1598.2 355.9 L1599.0 375.7 L1598.3 395.4" fill="none" stroke="#6fd0ff" stroke-width="1.16" opacity="0.52"/><path d="M1526.0 145.9 L1542.3 158.9 L1557.6 173.1 L1571.9 188.2 L1585.2 204.2 L1597.3 221.0 L1608.3 238.4 L1618.1 256.5 L1626.7 275.2 L1634.0 294.3 L1640.1 313.7 L1644.9 333.4 L1648.5 353.4 L1650.7 373.4 L1651.7 393.5" fill="none" stroke="#8fe0ff" stroke-width="1.19" opacity="0.24"/><path d="M1553.3 159.7 L1568.2 173.9 L1582.1 189.0 L1595.0 205.0 L1606.9 221.7 L1617.7 239.1 L1627.4 257.0 L1636.0 275.5 L1643.3 294.5 L1649.5 313.8 L1654.4 333.4 L1658.2 353.2 L1660.7 373.2 L1662.0 393.2" fill="none" stroke="#4aa0ff" stroke-width="0.65" opacity="0.21"/><path d="M1483.1 178.0 L1499.5 192.2 L1514.6 207.8 L1528.1 224.4 L1540.0 242.0 L1550.3 260.3 L1558.9 279.3 L1565.8 298.7 L1571.0 318.3 L1574.5 338.1 L1576.3 357.8 L1576.5 377.4 L1575.0 396.6" fill="none" stroke="#4aa0ff" stroke-width="0.86" opacity="0.43"/><path d="M1515.3 158.8 L1531.6 172.6 L1546.7 187.5 L1560.7 203.5 L1573.3 220.4 L1584.7 238.0 L1594.8 256.4 L1603.4 275.2 L1610.7 294.6 L1616.6 314.3 L1621.0 334.2 L1624.0 354.2 L1625.6 374.3 L1625.8 394.3" fill="none" stroke="#6fd0ff" stroke-width="1.49" opacity="0.37"/><path d="M1505.1 146.0 L1522.2 158.6 L1538.2 172.5 L1553.2 187.5 L1566.9 203.5 L1579.5 220.4 L1590.7 238.0 L1600.7 256.3 L1609.4 275.1 L1616.7 294.4 L1622.6 314.0 L1627.2 333.9 L1630.3 353.9 L1632.1 374.0 L1632.5 394.1" fill="none" stroke="#4aa0ff" stroke-width="0.62" opacity="0.28"/><path d="M1520.0 173.1 L1535.5 187.9 L1549.7 203.9 L1562.6 220.7 L1574.1 238.4 L1584.3 256.8 L1593.0 275.7 L1600.2 295.1 L1605.9 314.8 L1610.2 334.8 L1612.9 354.8 L1614.2 374.9 L1614.0 394.7" fill="none" stroke="#4aa0ff" stroke-width="1.49" opacity="0.51"/><path d="M1505.7 174.4 L1521.6 189.0 L1536.2 204.8 L1549.3 221.7 L1561.0 239.3 L1571.3 257.7 L1579.9 276.7 L1587.1 296.1 L1592.6 315.9 L1596.6 335.8 L1599.0 355.8 L1599.9 375.7 L1599.2 395.4" fill="none" stroke="#6fd0ff" stroke-width="1.12" opacity="0.58"/><path d="M1441.4 171.7 L1459.8 183.7 L1476.8 197.5 L1492.2 212.6 L1506.0 229.0 L1518.1 246.4 L1528.3 264.5 L1536.8 283.3 L1543.4 302.5 L1548.1 321.9 L1551.0 341.4 L1552.0 360.6 L1551.3 379.6 L1549.0 398.1" fill="none" stroke="#58b8ff" stroke-width="1.14" opacity="0.36"/><path d="M1523.5 145.8 L1539.9 158.8 L1555.3 172.9 L1569.7 188.0 L1583.0 204.0 L1595.2 220.8 L1606.2 238.3 L1616.0 256.5 L1624.6 275.1 L1631.9 294.2 L1638.0 313.7 L1642.8 333.5 L1646.3 353.4 L1648.5 373.5 L1649.4 393.5" fill="none" stroke="#8fe0ff" stroke-width="0.81" opacity="0.24"/><path d="M1598.9 166.9 L1612.0 181.1 L1624.4 196.1 L1636.0 211.6 L1646.9 227.7 L1656.9 244.4 L1666.0 261.6 L1674.3 279.2 L1681.7 297.3 L1688.1 315.8 L1693.5 334.6 L1698.0 353.7 L1701.5 373.0 L1704.0 392.5" fill="none" stroke="#6fd0ff" stroke-width="1.45" opacity="0.10"/><path d="M1550.8 159.5 L1565.8 173.7 L1579.8 188.8 L1592.8 204.8 L1604.7 221.5 L1615.6 238.9 L1625.3 256.9 L1633.9 275.4 L1641.2 294.4 L1647.4 313.8 L1652.3 333.4 L1656.0 353.2 L1658.4 373.2 L1659.6 393.3" fill="none" stroke="#4aa0ff" stroke-width="0.91" opacity="0.27"/><path d="M1492.0 176.3 L1508.3 190.7 L1523.1 206.4 L1536.5 223.1 L1548.4 240.8 L1558.7 259.1 L1567.3 278.1 L1574.3 297.5 L1579.7 317.2 L1583.3 337.1 L1585.4 356.9 L1585.8 376.6 L1584.7 396.1" fill="none" stroke="#8fe0ff" stroke-width="1.36" opacity="0.32"/><path d="M1456.0 184.9 L1473.0 198.5 L1488.5 213.6 L1502.3 229.9 L1514.4 247.3 L1524.6 265.4 L1533.0 284.1 L1539.6 303.3 L1544.2 322.6 L1547.0 342.0 L1547.9 361.2 L1547.1 380.0 L1544.5 398.4" fill="none" stroke="#8fe0ff" stroke-width="0.83" opacity="0.31"/><path d="M1427.7 176.6 L1446.4 188.2 L1463.6 201.5 L1479.2 216.4 L1493.1 232.5 L1505.2 249.7 L1515.4 267.8 L1523.6 286.4 L1530.0 305.4 L1534.4 324.6 L1536.8 343.7 L1537.4 362.7 L1536.2 381.2 L1533.2 399.1" fill="none" stroke="#6fd0ff" stroke-width="0.92" opacity="0.27"/><path d="M1478.8 148.1 L1496.9 160.1 L1513.8 173.6 L1529.5 188.3 L1543.9 204.2 L1556.9 221.1 L1568.5 238.7 L1578.7 257.1 L1587.4 276.1 L1594.5 295.5 L1600.2 315.3 L1604.3 335.2 L1606.9 355.2 L1608.0 375.2 L1607.6 395.0" fill="none" stroke="#6fd0ff" stroke-width="0.65" opacity="0.34"/><path d="M1546.5 159.1 L1561.7 173.3 L1575.8 188.5 L1588.9 204.4 L1601.0 221.2 L1611.9 238.6 L1621.6 256.7 L1630.2 275.3 L1637.6 294.3 L1643.7 313.7 L1648.6 333.4 L1652.2 353.3 L1654.5 373.3 L1655.6 393.4" fill="none" stroke="#8fe0ff" stroke-width="0.99" opacity="0.23"/><path d="M1491.9 176.3 L1508.2 190.7 L1523.0 206.4 L1536.4 223.1 L1548.3 240.8 L1558.6 259.2 L1567.2 278.1 L1574.2 297.5 L1579.6 317.2 L1583.3 337.1 L1585.3 356.9 L1585.7 376.6 L1584.6 396.1" fill="none" stroke="#4aa0ff" stroke-width="1.40" opacity="0.49"/><path d="M1579.7 163.0 L1593.5 177.3 L1606.6 192.4 L1618.8 208.2 L1630.1 224.6 L1640.4 241.6 L1649.8 259.2 L1658.2 277.2 L1665.6 295.7 L1671.9 314.6 L1677.1 333.8 L1681.3 353.3 L1684.4 372.9 L1686.4 392.7" fill="none" stroke="#58b8ff" stroke-width="1.25" opacity="0.17"/><path d="M1443.7 189.1 L1461.0 202.4 L1476.6 217.2 L1490.5 233.3 L1502.6 250.5 L1512.8 268.5 L1521.0 287.1 L1527.3 306.0 L1531.6 325.2 L1534.0 344.3 L1534.5 363.1 L1533.1 381.5 L1530.1 399.3" fill="none" stroke="#58b8ff" stroke-width="1.18" opacity="0.22"/><path d="M1449.5 153.5 L1468.6 164.5 L1486.3 177.3 L1502.7 191.6 L1517.7 207.2 L1531.2 223.9 L1543.1 241.5 L1553.4 259.9 L1562.0 278.8 L1569.0 298.2 L1574.2 317.9 L1577.8 337.7 L1579.7 357.5 L1579.9 377.1 L1578.6 396.4" fill="none" stroke="#58b8ff" stroke-width="0.75" opacity="0.49"/><path d="M1476.0 148.5 L1494.2 160.4 L1511.2 173.8 L1527.0 188.5 L1541.4 204.4 L1554.5 221.2 L1566.1 238.9 L1576.3 257.3 L1585.0 276.3 L1592.2 295.7 L1597.8 315.4 L1601.9 335.4 L1604.4 355.4 L1605.4 375.3 L1604.9 395.1" fill="none" stroke="#8fe0ff" stroke-width="0.97" opacity="0.39"/><path d="M1459.4 166.6 L1477.4 179.1 L1494.0 193.3 L1509.2 208.7 L1522.8 225.3 L1534.8 242.9 L1545.1 261.2 L1553.6 280.1 L1560.5 299.5 L1565.6 319.1 L1568.9 338.8 L1570.6 358.4 L1570.5 377.9 L1568.8 396.9" fill="none" stroke="#6fd0ff" stroke-width="0.75" opacity="0.40"/><path d="M1425.3 160.6 L1445.0 170.6 L1463.4 182.7 L1480.3 196.5 L1495.7 211.7 L1509.4 228.2 L1521.5 245.6 L1531.7 263.8 L1540.2 282.6 L1546.9 301.8 L1551.7 321.3 L1554.6 340.8 L1555.8 360.2 L1555.3 379.2 L1553.0 397.8" fill="none" stroke="#4aa0ff" stroke-width="1.10" opacity="0.37"/><path d="M1484.1 147.5 L1502.1 159.6 L1518.8 173.2 L1534.3 188.0 L1548.6 203.9 L1561.5 220.8 L1573.1 238.5 L1583.2 256.8 L1591.9 275.8 L1599.1 295.2 L1604.8 314.9 L1609.0 334.9 L1611.7 354.9 L1613.0 374.9 L1612.7 394.8" fill="none" stroke="#4aa0ff" stroke-width="0.73" opacity="0.48"/><path d="M1431.1 158.6 L1450.7 168.9 L1468.9 181.2 L1485.7 195.1 L1501.0 210.5 L1514.7 227.0 L1526.7 244.4 L1537.0 262.7 L1545.6 281.6 L1552.3 300.8 L1557.2 320.4 L1560.3 340.0 L1561.7 359.4 L1561.4 378.7 L1559.3 397.5" fill="none" stroke="#6fd0ff" stroke-width="0.89" opacity="0.31"/><path d="M1502.1 174.8 L1518.1 189.4 L1532.7 205.2 L1546.0 222.0 L1557.7 239.7 L1567.9 258.1 L1576.6 277.0 L1583.7 296.5 L1589.2 316.2 L1593.1 336.1 L1595.4 356.1 L1596.2 375.9 L1595.4 395.6" fill="none" stroke="#6fd0ff" stroke-width="1.27" opacity="0.39"/><path d="M1493.8 160.4 L1510.8 173.8 L1526.6 188.6 L1541.0 204.4 L1554.1 221.3 L1565.7 238.9 L1575.9 257.3 L1584.6 276.3 L1591.8 295.7 L1597.4 315.5 L1601.5 335.4 L1604.0 355.4 L1605.0 375.4 L1604.5 395.1" fill="none" stroke="#4aa0ff" stroke-width="0.84" opacity="0.46"/><path d="M1566.3 161.0 L1580.7 175.3 L1594.2 190.5 L1606.8 206.3 L1618.4 222.9 L1629.0 240.1 L1638.5 257.9 L1647.0 276.2 L1654.4 295.0 L1660.6 314.1 L1665.7 333.5 L1669.7 353.2 L1672.5 373.0 L1674.1 392.9" fill="none" stroke="#8fe0ff" stroke-width="0.71" opacity="0.20"/><path d="M1512.6 158.9 L1528.9 172.7 L1544.1 187.6 L1558.1 203.6 L1570.9 220.4 L1582.3 238.1 L1592.4 256.4 L1601.0 275.3 L1608.3 294.7 L1614.1 314.4 L1618.5 334.3 L1621.5 354.4 L1623.0 374.4 L1623.1 394.4" fill="none" stroke="#58b8ff" stroke-width="0.68" opacity="0.45"/><path d="M1598.7 166.8 L1611.8 181.1 L1624.2 196.0 L1635.9 211.5 L1646.7 227.7 L1656.7 244.4 L1665.9 261.6 L1674.1 279.2 L1681.5 297.3 L1687.9 315.8 L1693.4 334.6 L1697.8 353.7 L1701.3 373.0 L1703.8 392.5" fill="none" stroke="#4aa0ff" stroke-width="1.46" opacity="0.10"/><path d="M1601.4 178.8 L1614.2 193.8 L1626.2 209.5 L1637.3 225.8 L1647.5 242.7 L1656.7 260.1 L1665.1 278.0 L1672.4 296.4 L1678.8 315.1 L1684.2 334.1 L1688.5 353.4 L1691.7 372.9 L1694.0 392.6" fill="none" stroke="#6fd0ff" stroke-width="0.98" opacity="0.12"/><path d="M1583.2 175.7 L1596.6 190.8 L1609.1 206.7 L1620.6 223.2 L1631.2 240.4 L1640.7 258.1 L1649.2 276.4 L1656.5 295.1 L1662.8 314.2 L1667.9 333.6 L1671.9 353.2 L1674.8 373.0 L1676.5 392.9" fill="none" stroke="#4aa0ff" stroke-width="0.60" opacity="0.21"/><path d="M1506.6 174.3 L1522.5 188.9 L1537.0 204.8 L1550.2 221.6 L1561.9 239.3 L1572.1 257.7 L1580.8 276.6 L1587.9 296.1 L1593.5 315.8 L1597.5 335.7 L1599.9 355.7 L1600.8 375.6 L1600.1 395.3" fill="none" stroke="#4aa0ff" stroke-width="1.48" opacity="0.55"/><path d="M1442.0 155.4 L1461.3 166.1 L1479.3 178.7 L1495.8 192.9 L1510.9 208.4 L1524.5 225.0 L1536.5 242.6 L1546.8 260.9 L1555.4 279.8 L1562.2 299.2 L1567.3 318.8 L1570.7 338.6 L1572.4 358.2 L1572.4 377.7 L1570.8 396.8" fill="none" stroke="#6fd0ff" stroke-width="1.45" opacity="0.31"/><path d="M1559.6 160.3 L1574.3 174.5 L1588.0 189.7 L1600.8 205.6 L1612.5 222.2 L1623.2 239.5 L1632.8 257.4 L1641.3 275.8 L1648.7 294.7 L1654.9 313.9 L1659.9 333.4 L1663.8 353.2 L1666.4 373.1 L1667.9 393.1" fill="none" stroke="#4aa0ff" stroke-width="0.68" opacity="0.24"/><path d="M1556.8 148.4 L1571.8 161.8 L1586.0 176.1 L1599.3 191.2 L1611.7 207.0 L1623.2 223.6 L1633.7 240.7 L1643.2 258.4 L1651.6 276.6 L1659.0 295.3 L1665.3 314.3 L1670.4 333.6 L1674.5 353.2 L1677.4 373.0 L1679.2 392.8" fill="none" stroke="#6fd0ff" stroke-width="1.18" opacity="0.16"/><path d="M1510.4 212.3 l8.0 5.8" stroke="#a8ecff" stroke-width="2.2" opacity="0.32" filter="url(#b1)"/><path d="M1491.2 204.5 l10.2 5.5" stroke="#a8ecff" stroke-width="2.2" opacity="0.25" filter="url(#b1)"/><path d="M1502.4 276.1 l6.1 3.8" stroke="#a8ecff" stroke-width="2.2" opacity="0.27" filter="url(#b1)"/><path d="M1575.9 282.0 l13.1 4.9" stroke="#a8ecff" stroke-width="2.2" opacity="0.21" filter="url(#b1)"/><path d="M1550.5 236.5 l6.2 5.0" stroke="#a8ecff" stroke-width="2.2" opacity="0.32" filter="url(#b1)"/><path d="M1522.0 229.7 l11.3 7.6" stroke="#a8ecff" stroke-width="2.2" opacity="0.21" filter="url(#b1)"/><path d="M1522.1 287.1 l7.6 6.8" stroke="#a8ecff" stroke-width="2.2" opacity="0.33" filter="url(#b1)"/><path d="M1530.5 222.7 l13.8 3.9" stroke="#a8ecff" stroke-width="2.2" opacity="0.36" filter="url(#b1)"/><path d="M1503.1 224.9 l12.1 3.8" stroke="#a8ecff" stroke-width="2.2" opacity="0.39" filter="url(#b1)"/><path d="M1529.6 220.3 l7.8 4.5" stroke="#a8ecff" stroke-width="2.2" opacity="0.32" filter="url(#b1)"/><path d="M1574.9 214.8 l9.1 3.3" stroke="#a8ecff" stroke-width="2.2" opacity="0.39" filter="url(#b1)"/><path d="M1494.2 202.0 l6.5 4.4" stroke="#a8ecff" stroke-width="2.2" opacity="0.37" filter="url(#b1)"/><path d="M1568.4 293.9 l14.0 7.6" stroke="#a8ecff" stroke-width="2.2" opacity="0.23" filter="url(#b1)"/><path d="M1554.6 199.3 l11.3 4.3" stroke="#a8ecff" stroke-width="2.2" opacity="0.24" filter="url(#b1)"/><path d="M1513.2 217.9 l6.0 3.7" stroke="#a8ecff" stroke-width="2.2" opacity="0.24" filter="url(#b1)"/><path d="M1575.6 211.7 l13.7 3.2" stroke="#a8ecff" stroke-width="2.2" opacity="0.24" filter="url(#b1)"/><path d="M1562.2 306.0 l9.5 2.3" stroke="#a8ecff" stroke-width="2.2" opacity="0.27" filter="url(#b1)"/><path d="M1517.3 319.1 l7.5 4.2" stroke="#a8ecff" stroke-width="2.2" opacity="0.37" filter="url(#b1)"/><path d="M1561.2 298.5 l6.3 2.2" stroke="#a8ecff" stroke-width="2.2" opacity="0.17" filter="url(#b1)"/><path d="M1572.0 229.7 l12.0 7.4" stroke="#a8ecff" stroke-width="2.2" opacity="0.23" filter="url(#b1)"/><path d="M1541.7 230.4 l11.7 3.9" stroke="#a8ecff" stroke-width="2.2" opacity="0.22" filter="url(#b1)"/><path d="M1571.6 280.6 l13.5 2.1" stroke="#a8ecff" stroke-width="2.2" opacity="0.21" filter="url(#b1)"/><path d="M1527.5 324.2 l13.6 4.3" stroke="#a8ecff" stroke-width="2.2" opacity="0.21" filter="url(#b1)"/><path d="M1523.0 261.6 l13.4 3.1" stroke="#a8ecff" stroke-width="2.2" opacity="0.35" filter="url(#b1)"/><path d="M1553.8 306.1 l12.2 5.6" stroke="#a8ecff" stroke-width="2.2" opacity="0.23" filter="url(#b1)"/><path d="M1512.0 243.9 l12.3 2.5" stroke="#a8ecff" stroke-width="2.2" opacity="0.20" filter="url(#b1)"/><path d="M1555.3 228.4 l6.5 2.2" stroke="#a8ecff" stroke-width="2.2" opacity="0.29" filter="url(#b1)"/><path d="M1568.3 328.4 l8.1 2.5" stroke="#a8ecff" stroke-width="2.2" opacity="0.17" filter="url(#b1)"/><path d="M1529.8 290.8 l9.6 3.4" stroke="#a8ecff" stroke-width="2.2" opacity="0.25" filter="url(#b1)"/><path d="M1542.0 286.0 l12.0 7.1" stroke="#a8ecff" stroke-width="2.2" opacity="0.32" filter="url(#b1)"/><path d="M1509.4 271.5 l9.0 6.4" stroke="#a8ecff" stroke-width="2.2" opacity="0.20" filter="url(#b1)"/><path d="M1504.7 228.1 l7.2 7.3" stroke="#a8ecff" stroke-width="2.2" opacity="0.29" filter="url(#b1)"/><path d="M1083 119 C1130 94 1175 72 1215 59 C1260 48 1310 48 1367 65 C1405 77 1440 98 1477 127 C1500 150 1515 175 1535 226" fill="none" stroke="#3c8cff" stroke-width="8" opacity="0.45" filter="url(#b4)"/><path d="M1083 119 C1130 94 1175 72 1215 59 C1260 48 1310 48 1367 65 C1405 77 1440 98 1477 127 C1500 150 1515 175 1535 226" fill="none" stroke="url(#rimg)" stroke-width="2.2" filter="url(#b1)"/><path d="M1106.9 300.0 A218.1 213.9 0 0 1 1453.3 123.9" fill="none" stroke="#1e4d9a" stroke-width="0.8" opacity="0.25"/><path d="M1078.0 300.0 A247.0 242.2 0 0 1 1470.3 101.3" fill="none" stroke="#1e4d9a" stroke-width="0.8" opacity="0.28"/><path d="M1111.0 300.0 A214.0 209.8 0 0 1 1450.9 127.1" fill="none" stroke="#1e4d9a" stroke-width="0.8" opacity="0.35"/><path d="M1092.7 300.0 A232.3 227.8 0 0 1 1461.7 112.8" fill="none" stroke="#1e4d9a" stroke-width="0.8" opacity="0.40"/><path d="M1116.6 300.0 A208.4 204.3 0 0 1 1447.6 131.5" fill="none" stroke="#1e4d9a" stroke-width="0.8" opacity="0.27"/><path d="M1085.5 300.0 A239.5 234.8 0 0 1 1465.9 107.2" fill="none" stroke="#1e4d9a" stroke-width="0.8" opacity="0.36"/><path d="M1081.4 300.0 A243.6 238.9 0 0 1 1468.3 103.9" fill="none" stroke="#1e4d9a" stroke-width="0.8" opacity="0.16"/><path d="M1108.3 300.0 A216.7 212.5 0 0 1 1452.5 125.0" fill="none" stroke="#1e4d9a" stroke-width="0.8" opacity="0.18"/><path d="M1112.8 300.0 A212.2 208.1 0 0 1 1449.8 128.6" fill="none" stroke="#1e4d9a" stroke-width="0.8" opacity="0.39"/><path d="M1095.7 300.0 A229.3 224.8 0 0 1 1459.9 115.2" fill="none" stroke="#1e4d9a" stroke-width="0.8" opacity="0.38"/><path d="M1370.6 374.9 A77.2 54.1 0 0 1 1525.1 374.9" fill="none" stroke="#2a60b0" stroke-width="0.7" opacity="0.07"/><path d="M1349.2 340.6 A117.8 82.4 0 0 1 1584.7 340.6" fill="none" stroke="#2a60b0" stroke-width="0.7" opacity="0.09"/><path d="M1190.2 366.9 A102.0 71.4 0 0 1 1394.2 366.9" fill="none" stroke="#2a60b0" stroke-width="0.7" opacity="0.06"/><path d="M1240.8 389.9 A60.4 42.3 0 0 1 1361.6 389.9" fill="none" stroke="#2a60b0" stroke-width="0.7" opacity="0.10"/><path d="M1182.4 362.7 A60.3 42.2 0 0 1 1303.1 362.7" fill="none" stroke="#2a60b0" stroke-width="0.7" opacity="0.10"/><path d="M1256.4 350.3 A58.5 41.0 0 0 1 1373.4 350.3" fill="none" stroke="#2a60b0" stroke-width="0.7" opacity="0.11"/><path d="M1160.4 340.1 A94.8 66.4 0 0 1 1350.0 340.1" fill="none" stroke="#2a60b0" stroke-width="0.7" opacity="0.08"/><path d="M1298.4 339.1 A95.0 66.5 0 0 1 1488.4 339.1" fill="none" stroke="#2a60b0" stroke-width="0.7" opacity="0.06"/><path d="M1228.8 358.3 A109.5 76.7 0 0 1 1447.9 358.3" fill="none" stroke="#2a60b0" stroke-width="0.7" opacity="0.07"/><path d="M1179.6 386.7 A135.3 94.7 0 0 1 1450.3 386.7" fill="none" stroke="#2a60b0" stroke-width="0.7" opacity="0.08"/><path d="M1365.8 429.7 A81.6 57.2 0 0 1 1529.1 429.7" fill="none" stroke="#2a60b0" stroke-width="0.7" opacity="0.08"/><path d="M1355.0 350.4 A59.7 41.8 0 0 1 1474.4 350.4" fill="none" stroke="#2a60b0" stroke-width="0.7" opacity="0.05"/><path d="M1211.5 412.0 A130.2 91.1 0 0 1 1471.9 412.0" fill="none" stroke="#2a60b0" stroke-width="0.7" opacity="0.08"/><path d="M1222.3 346.3 A128.3 89.8 0 0 1 1478.9 346.3" fill="none" stroke="#2a60b0" stroke-width="0.7" opacity="0.05"/><path d="M1298.6 421.0 A95.2 66.6 0 0 1 1488.9 421.0" fill="none" stroke="#2a60b0" stroke-width="0.7" opacity="0.06"/><path d="M1226.8 380.4 A102.2 71.6 0 0 1 1431.2 380.4" fill="none" stroke="#2a60b0" stroke-width="0.7" opacity="0.06"/><path d="M1500 392 C1510 362 1530 348 1548 345 C1575 345 1595 365 1605 392" fill="none" stroke="#5fc0ff" stroke-width="12" filter="url(#b4)" opacity="0.5"/><path d="M1500 392 C1510 362 1530 348 1548 345 C1575 345 1595 365 1605 392" fill="none" stroke="#a8e6ff" stroke-width="3" filter="url(#b1)" opacity="0.85"/><path d="M1520 300 C1530 330 1540 345 1560 360 C1580 372 1600 380 1620 385" fill="none" stroke="#8fdcff" stroke-width="2" filter="url(#b1)" opacity="0.6"/><path d="M1460.5 -61.0 A412.2 412.2 0 0 1 1674.0 103.1" fill="none" stroke="#4a8ae0" stroke-width="0.8" opacity="0.10"/><path d="M1574.8 -73.9 A472.2 472.2 0 0 1 1774.9 171.5" fill="none" stroke="#4a8ae0" stroke-width="0.8" opacity="0.11"/><path d="M1552.9 38.8 A366.7 366.7 0 0 1 1687.1 246.4" fill="none" stroke="#4a8ae0" stroke-width="0.8" opacity="0.15"/><path d="M1536.4 52.9 A345.5 345.5 0 0 1 1633.3 164.5" fill="none" stroke="#4a8ae0" stroke-width="0.8" opacity="0.21"/><path d="M1601.0 -101.9 A509.9 509.9 0 0 1 1726.9 9.9" fill="none" stroke="#4a8ae0" stroke-width="0.8" opacity="0.19"/><path d="M1420.1 -54.0 A394.4 394.4 0 0 1 1629.3 73.1" fill="none" stroke="#4a8ae0" stroke-width="0.8" opacity="0.20"/><path d="M1362.2 -51.7 A383.1 383.1 0 0 1 1520.4 -2.4" fill="none" stroke="#4a8ae0" stroke-width="0.8" opacity="0.15"/><path d="M1334.1 -111.2 A441.2 441.2 0 0 1 1493.2 -79.9" fill="none" stroke="#4a8ae0" stroke-width="0.8" opacity="0.18"/><path d="M1297.6 -259.3 A590.2 590.2 0 0 1 1587.9 -200.9" fill="none" stroke="#4a8ae0" stroke-width="0.8" opacity="0.19"/><path d="M1514.3 43.1 A341.1 341.1 0 0 1 1593.8 113.8" fill="none" stroke="#4a8ae0" stroke-width="0.8" opacity="0.16"/><path d="M1523.0 -119.9 A489.5 489.5 0 0 1 1681.4 -10.8" fill="none" stroke="#4a8ae0" stroke-width="0.8" opacity="0.14"/><path d="M1452.0 -153.8 A499.0 499.0 0 0 1 1686.7 -18.9" fill="none" stroke="#4a8ae0" stroke-width="0.8" opacity="0.14"/><path d="M1298.5 -126.0 A457.1 457.1 0 0 1 1534.1 -79.0" fill="none" stroke="#4a8ae0" stroke-width="0.8" opacity="0.15"/><path d="M1525.2 -17.1 A398.2 398.2 0 0 1 1687.5 154.6" fill="none" stroke="#4a8ae0" stroke-width="0.8" opacity="0.14"/><path d="M1437.2 -36.7 A382.1 382.1 0 0 1 1543.5 13.1" fill="none" stroke="#4a8ae0" stroke-width="0.8" opacity="0.10"/><path d="M1323.1 -124.8 A454.9 454.9 0 0 1 1523.5 -81.7" fill="none" stroke="#4a8ae0" stroke-width="0.8" opacity="0.15"/><path d="M1467.1 16.9 A341.8 341.8 0 0 1 1552.9 70.8" fill="none" stroke="#4a8ae0" stroke-width="0.8" opacity="0.18"/><path d="M1501.8 -198.3 A555.5 555.5 0 0 1 1643.6 -128.5" fill="none" stroke="#4a8ae0" stroke-width="0.8" opacity="0.15"/><path d="M1599.4 -17.4 A439.6 439.6 0 0 1 1695.3 85.4" fill="none" stroke="#4a8ae0" stroke-width="0.8" opacity="0.20"/><path d="M1620.0 -216.7 A618.9 618.9 0 0 1 1883.0 52.1" fill="none" stroke="#4a8ae0" stroke-width="0.8" opacity="0.11"/><path d="M1511.1 -257.4 A614.7 614.7 0 0 1 1839.9 -13.3" fill="none" stroke="#4a8ae0" stroke-width="0.8" opacity="0.21"/><path d="M1521.7 4.3 A377.9 377.9 0 0 1 1682.2 193.0" fill="none" stroke="#4a8ae0" stroke-width="0.8" opacity="0.09"/><path d="M1539.5 -47.5 A431.8 431.8 0 0 1 1650.8 41.1" fill="none" stroke="#4a8ae0" stroke-width="0.8" opacity="0.21"/><path d="M1545.3 -18.6 A409.7 409.7 0 0 1 1645.2 68.2" fill="none" stroke="#4a8ae0" stroke-width="0.8" opacity="0.15"/><path d="M1375.5 -265.0 A596.8 596.8 0 0 1 1591.1 -206.6" fill="none" stroke="#4a8ae0" stroke-width="0.8" opacity="0.15"/><path d="M1305.4 -91.8 A422.5 422.5 0 0 1 1448.0 -75.7" fill="none" stroke="#4a8ae0" stroke-width="0.8" opacity="0.10"/><path d="M1589.8 -212.6 A601.6 601.6 0 0 1 1865.9 56.6" fill="none" stroke="#4a8ae0" stroke-width="0.8" opacity="0.10"/><path d="M1331.7 -227.6 A557.6 557.6 0 0 1 1595.6 -160.3" fill="none" stroke="#4a8ae0" stroke-width="0.8" opacity="0.17"/><path d="M1574.7 -28.9 A434.3 434.3 0 0 1 1717.6 133.9" fill="none" stroke="#4a8ae0" stroke-width="0.8" opacity="0.16"/><path d="M1327.0 -255.9 A585.9 585.9 0 0 1 1702.9 -121.9" fill="none" stroke="#4a8ae0" stroke-width="0.8" opacity="0.17"/><path d="M262 80 C300 86 330 102 355 128" fill="none" stroke="#2a6ac0" stroke-width="5" opacity="0.25" filter="url(#b4)"/><path d="M262 80 C300 86 330 102 355 128" fill="none" stroke="#3a7ad0" stroke-width="1.2" opacity="0.45" filter="url(#b1)"/><rect x="0" y="1011" width="1920" height="18" fill="#1b2272" opacity="0.6"/></svg><div id="panel" class="a"><div class="a" style="left:7px;top:0;font-weight:bold;letter-spacing:0.3px">Files</div><svg class="a" style="left:0;top:0" width="1920" height="24"><path d="M1265 9.6 A11 11 0 0 1 1281 9.6 L1273 18 Z" fill="#f2f2f2"/><path d="M1265 9.6 A11 11 0 0 1 1281 9.6" fill="none" stroke="#8a8f99" stroke-width="1" opacity="0.6"/><path d="M1305 4.5 C1301 4.5 1300 8 1300 11 C1300 14 1299 15.5 1298 16.5 H1312 C1311 15.5 1310 14 1310 11 C1310 8 1309 4.5 1305 4.5 Z" fill="#f2f2f2"/><rect x="1303" y="17.2" width="4" height="1.8" rx="0.9" fill="#f2f2f2"/><rect x="1335" y="4" width="4" height="2" fill="#f2f2f2"/><rect x="1332" y="5.5" width="10.5" height="13.5" rx="1" fill="#f2f2f2"/><path d="M1338 8 L1334.8 13 H1337.3 L1336.5 17 L1339.8 11.8 H1337.3 Z" fill="#1a2035"/><path d="M1430 10 h2.5 l3.5 -3 v10.5 l-3.5 -3 h-2.5 z" fill="#f2f2f2"/><path d="M1438 9.5 q1.5 2.75 0 5.5 M1440.3 8 q2.6 4.25 0 8.5 M1442.6 6.5 q3.6 5.75 0 11.5" fill="none" stroke="#c9ccd3" stroke-width="0.9"/><path d="M1738 8.3 A5.3 5.3 0 1 0 1744.6 8.3" fill="none" stroke="#f2f2f2" stroke-width="1.8"/><rect x="1740.4" y="5" width="1.8" height="6.5" fill="#f2f2f2"/></svg><div class="a" style="left:1352px;top:0;letter-spacing:0.05px">(92%)</div><div class="a" style="left:1459px;top:0;letter-spacing:0.66px">Du iun&nbsp; 5 2016 23:05:24</div><div class="a" style="left:1756px;top:0;letter-spacing:1.24px">Marius Nestor</div></div><div class="win" style="left:868px;top:385px;width:1027px;height:627px;box-shadow:0 1px 4px rgba(0,0,0,.25)"><div class="hdr" style="background:#363a46"><div class="a" style="left:187px;top:6px;width:446px;height:38px;background:#3e4250;border-radius:2px"></div><div class="pt" style="right:599px;color:#b4b9c3">icons</div><div class="pt" style="left:448px;color:#b4b9c3">Arc</div><div class="pt" style="left:507px;color:#b4b9c3">apps</div><div class="a" style="left:571px;top:6px;width:62px;height:38px;background:#4a85cf;border-radius:0 2px 2px 0"></div><div class="pt" style="left:582px;font-weight:bold;color:#d5dce6;letter-spacing:0.8px">128</div><svg class="a" style="left:0px;top:0px;" width="1027" height="50" viewBox="0 0 1027 50"><circle cx="19.5" cy="25" r="7.3" fill="#e5727b"/><circle cx="19.5" cy="25" r="7.6" fill="none" stroke="#3a2630" stroke-width="0.6" opacity="0.6"/><path d="M16.9 22.4 L22.1 27.6 M22.1 22.4 L16.9 27.6" stroke="#5b1c22" stroke-width="1.5" stroke-linecap="round"/><rect x="45.8" y="23.8" width="6.6" height="2.6" fill="#a9aeb7"/><path d="M75.8 21.9 h3.6 l-3.6 3.6 z M82.3 28 h-3.6 l3.6 -3.6 z" fill="#a9aeb7"/><rect x="97.2" y="15" width="1" height="20" fill="#4a4e5a"/><path d="M127 19.5 L120.5 25.2 L127 31" fill="none" stroke="#a9aeb7" stroke-width="1.7"/><path d="M157 19.5 L163.5 25.2 L157 31" fill="none" stroke="#868b95" stroke-width="1.7"/><circle cx="910.4" cy="22.8" r="4.6" fill="none" stroke="#a9aeb7" stroke-width="1.9"/><path d="M913.8 26.2 L917.8 30.2" stroke="#a9aeb7" stroke-width="2.6" stroke-linecap="round"/><rect x="952.2" y="20.0" width="2" height="2" fill="#a9aeb7"/><rect x="952.2" y="24.4" width="2" height="2" fill="#a9aeb7"/><rect x="952.2" y="28.8" width="2" height="2" fill="#a9aeb7"/><rect x="956.6" y="20.0" width="2" height="2" fill="#a9aeb7"/><rect x="956.6" y="24.4" width="2" height="2" fill="#a9aeb7"/><rect x="956.6" y="28.8" width="2" height="2" fill="#a9aeb7"/><rect x="961.0" y="20.0" width="2" height="2" fill="#a9aeb7"/><rect x="961.0" y="24.4" width="2" height="2" fill="#a9aeb7"/><rect x="961.0" y="28.8" width="2" height="2" fill="#a9aeb7"/><rect x="996" y="20.5" width="10.5" height="2" fill="#a9aeb7"/><rect x="996" y="24.5" width="10.5" height="2" fill="#a9aeb7"/><rect x="996" y="28.5" width="10.5" height="2" fill="#a9aeb7"/></svg></div><div class="side"><div class="si sel" style="top:4px"><span class="t">Home</span></div><div class="si" style="top:40px"><span class="t">Desktop</span></div><div class="si" style="top:76px"><span class="t">Documents</span></div><div class="si" style="top:112px"><span class="t">Downloads</span></div><div class="si" style="top:148px"><span class="t">Music</span></div><div class="si" style="top:184px"><span class="t">Pictures</span></div><div class="si" style="top:220px"><span class="t">Videos</span></div><div class="si" style="top:256px"><span class="t">Trash</span></div><div class="si" style="top:301px"><span class="t">matric3a…</span></div><div class="si" style="top:346px"><span class="t">Other Loc…</span></div><svg class="a" style="left:0px;top:0px;" width="195" height="400" viewBox="0 0 195 400"><path d="M20 14 L12.2 21 L14.4 21 L14.4 28 L25.7 28 L25.7 21 L27.9 21 L24.7 18.1 L24.7 15 L23.3 15 L23.3 16.8 Z" fill="#fff"/><rect x="13" y="51" width="14" height="12" rx="1" fill="#9ea4ae" transform="translate(0,0)"/><rect x="13" y="52.6" width="14" height="1" fill="#353945"/><path d="M15 86 h6.5 l4 4 v10 h-10.5 z" fill="#9ea4ae"/><path d="M21.5 86 v4 h4" fill="#353945" opacity="0.6"/><path d="M18.6 122 h3.2 v7.5 h3.6 l-5.2 6 l-5.2 -6 h3.6 z" fill="#9ea4ae"/><path d="M16 160 L25.3 158 L25.3 169.3 A2.6 2.3 0 1 1 23.4 167.4 L23.4 161 L17.9 162.2 L17.9 171 A2.6 2.3 0 1 1 16 169 Z" fill="#9ea4ae"/><path d="M12.8 197.5 h3.2 l1.4 -2.5 h5.6 l1.4 2.5 h3.2 v8.8 h-14.8 z" fill="#9ea4ae"/><circle cx="20.2" cy="201.4" r="2.6" fill="#353945"/><rect x="14.5" y="230.5" width="12" height="14.5" fill="none" stroke="#9ea4ae" stroke-width="1.8"/><path d="M17.4 230.5 v14.5 M23.6 230.5 v14.5 M17.4 237.8 h6.2" stroke="#9ea4ae" stroke-width="1.4"/><path d="M13 266.5 h14 M18 265 h4" stroke="#9ea4ae" stroke-width="1.8"/><rect x="14.7" y="269" width="10.6" height="10.6" fill="none" stroke="#9ea4ae" stroke-width="1.8"/><rect x="14" y="310" width="12" height="16" rx="1.5" fill="#9ea4ae"/><path d="M15.8 314.5 h8.4 M15.8 318 h8.4 M15.8 321.5 h8.4" stroke="#353945" stroke-width="1.3"/><path d="M20.2 357.5 v11 M14.7 363 h11" stroke="#9ea4ae" stroke-width="1.6"/></svg></div><div class="cont"><svg class="a" style="left:36px;top:8px" width="96" height="96" viewBox="0 0 96 96"><rect x="0.5" y="0.5" width="95" height="95" rx="2.5" fill="#fff" stroke="#d2d2d2" stroke-width="1"/><rect x="17.5" y="2.8" width="56.5" height="89.6" rx="28.2" fill="#4f8fe0"/><path d="M28.5 34.5 L63.7 58.3 L44.6 77.5 V16.8 L63.7 36.3 L28.5 65" fill="none" stroke="#fff" stroke-width="5.2" stroke-linejoin="miter"/><rect x="64.6" y="56.8" width="30.4" height="29.3" fill="#4b4f5a" opacity="0.85"/><path d="M90.4 71.6 V82.2 H79.2 Z" fill="#fff"/></svg><svg class="a" style="left:196px;top:8px" width="96" height="96" viewBox="0 0 96 96"><rect x="0.5" y="0.5" width="95" height="95" rx="2.5" fill="#fff" stroke="#d2d2d2" stroke-width="1"/><rect x="17.5" y="2.8" width="56.5" height="89.6" rx="28.2" fill="#4f8fe0"/><path d="M28.5 34.5 L63.7 58.3 L44.6 77.5 V16.8 L63.7 36.3 L28.5 65" fill="none" stroke="#fff" stroke-width="5.2" stroke-linejoin="miter"/><rect x="64.6" y="56.8" width="30.4" height="29.3" fill="#4b4f5a" opacity="0.85"/><path d="M90.4 71.6 V82.2 H79.2 Z" fill="#fff"/></svg><svg class="a" style="left:356px;top:8px" width="96" height="96" viewBox="0 0 96 96"><rect x="0.5" y="0.5" width="95" height="95" rx="2.5" fill="#fff" stroke="#d2d2d2" stroke-width="1"/><rect x="17.5" y="2.8" width="56.5" height="89.6" rx="28.2" fill="#4f8fe0"/><path d="M28.5 34.5 L63.7 58.3 L44.6 77.5 V16.8 L63.7 36.3 L28.5 65" fill="none" stroke="#fff" stroke-width="5.2" stroke-linejoin="miter"/><rect x="64.6" y="56.8" width="30.4" height="29.3" fill="#4b4f5a" opacity="0.85"/><path d="M90.4 71.6 V82.2 H79.2 Z" fill="#fff"/></svg><svg class="a" style="left:516px;top:8px" width="96" height="96" viewBox="0 0 96 96"><rect x="0.5" y="0.5" width="95" height="95" rx="2.5" fill="#fff" stroke="#d2d2d2" stroke-width="1"/><path d="M18 86 C6 86 1 74 3 62 C4 53 8 48 12 46 C12 30 22 22 34 23 C40 14 50 10 60 10 C73 10 80 22 80 38 C88 42 94 52 94 62 L94 86 Z" fill="#fcfcfc" stroke="#e2e2e2" stroke-width="1"/><rect x="64.6" y="56.8" width="30.4" height="29.3" fill="#4b4f5a" opacity="0.85"/><path d="M90.4 71.6 V82.2 H79.2 Z" fill="#fff"/></svg><svg class="a" style="left:676px;top:8px" width="96" height="96" viewBox="0 0 96 96"><rect x="0.5" y="0.5" width="95" height="95" rx="2.5" fill="#fff" stroke="#d2d2d2" stroke-width="1"/><rect x="17.5" y="2.8" width="56.5" height="89.6" rx="28.2" fill="#4f8fe0"/><path d="M28.5 34.5 L63.7 58.3 L44.6 77.5 V16.8 L63.7 36.3 L28.5 65" fill="none" stroke="#fff" stroke-width="5.2" stroke-linejoin="miter"/><rect x="64.6" y="56.8" width="30.4" height="29.3" fill="#4b4f5a" opacity="0.85"/><path d="M90.4 71.6 V82.2 H79.2 Z" fill="#fff"/></svg><svg class="a" style="left:36px;top:228px" width="96" height="96" viewBox="0 0 96 96"><rect x="0.5" y="0.5" width="95" height="95" rx="2.5" fill="#fff" stroke="#d2d2d2" stroke-width="1"/><rect x="18" y="30" width="60" height="61" rx="2" fill="#5d6270"/><rect x="22" y="82" width="53" height="4" fill="#8bd05a"/></svg><svg class="a" style="left:196px;top:228px" width="96" height="96" viewBox="0 0 96 96"><rect x="0.5" y="0.5" width="95" height="95" rx="2.5" fill="#fff" stroke="#d2d2d2" stroke-width="1"/><path d="M18 86 C6 86 1 74 3 62 C4 53 8 48 12 46 C12 30 22 22 34 23 C40 14 50 10 60 10 C73 10 80 22 80 38 C88 42 94 52 94 62 L94 86 Z" fill="#fcfcfc" stroke="#e2e2e2" stroke-width="1"/></svg><svg class="a" style="left:356px;top:228px" width="96" height="96" viewBox="0 0 96 96"><rect x="0.5" y="0.5" width="95" height="95" rx="2.5" fill="#fff" stroke="#d2d2d2" stroke-width="1"/><path d="M20 15 h55 a6 6 0 0 1 6 6 v53 a6 6 0 0 1 -6 6 h-55 a6 6 0 0 1 -6 -6 v-53 a6 6 0 0 1 6 -6z" fill="#4a4f5c" transform="translate(0,0)"/><circle cx="47.5" cy="47.5" r="38.5" fill="#4a4f5c"/><circle cx="47.5" cy="47.5" r="32.3" fill="#fdf05a"/><circle cx="47.5" cy="47.5" r="11.2" fill="#4a4f5c"/><circle cx="20.5" cy="20.5" r="1.6" fill="#a7acc0"/><circle cx="74.5" cy="20.5" r="1.6" fill="#a7acc0"/><circle cx="20.5" cy="74.5" r="1.6" fill="#a7acc0"/><circle cx="74.5" cy="74.5" r="1.6" fill="#a7acc0"/></svg><svg class="a" style="left:516px;top:228px" width="96" height="96" viewBox="0 0 96 96"><rect x="0.5" y="0.5" width="95" height="95" rx="2.5" fill="#fff" stroke="#d2d2d2" stroke-width="1"/><rect x="17.5" y="2.8" width="56.5" height="89.6" rx="28.2" fill="#4f8fe0"/><path d="M28.5 34.5 L63.7 58.3 L44.6 77.5 V16.8 L63.7 36.3 L28.5 65" fill="none" stroke="#fff" stroke-width="5.2" stroke-linejoin="miter"/><rect x="64.6" y="56.8" width="30.4" height="29.3" fill="#4b4f5a" opacity="0.85"/><path d="M90.4 71.6 V82.2 H79.2 Z" fill="#fff"/></svg><svg class="a" style="left:676px;top:228px" width="96" height="96" viewBox="0 0 96 96"><rect x="0.5" y="0.5" width="95" height="95" rx="2.5" fill="#fff" stroke="#d2d2d2" stroke-width="1"/><circle cx="47.5" cy="47.5" r="43" fill="#fff" stroke="#ececec" stroke-width="1.2"/><path d="M47.5 47.5 L47.50 12.00 A35.5 35.5 0 0 1 65.25 16.76 Z" fill="#f05a5a"/><path d="M47.5 47.5 L65.25 16.76 A35.5 35.5 0 0 1 78.24 29.75 Z" fill="#f9913f"/><path d="M47.5 47.5 L78.24 29.75 A35.5 35.5 0 0 1 83.00 47.50 Z" fill="#f9b33f"/><path d="M47.5 47.5 L83.00 47.50 A35.5 35.5 0 0 1 78.24 65.25 Z" fill="#fde84a"/><path d="M47.5 47.5 L78.24 65.25 A35.5 35.5 0 0 1 65.25 78.24 Z" fill="#d8ee57"/><path d="M47.5 47.5 L65.25 78.24 A35.5 35.5 0 0 1 47.50 83.00 Z" fill="#5fe06a"/><path d="M47.5 47.5 L47.50 83.00 A35.5 35.5 0 0 1 29.75 78.24 Z" fill="#48d4f0"/><path d="M47.5 47.5 L29.75 78.24 A35.5 35.5 0 0 1 16.76 65.25 Z" fill="#38aee0"/><path d="M47.5 47.5 L16.76 65.25 A35.5 35.5 0 0 1 12.00 47.50 Z" fill="#6a55c8"/><path d="M47.5 47.5 L12.00 47.50 A35.5 35.5 0 0 1 16.76 29.75 Z" fill="#e878e8"/><path d="M47.5 47.5 L16.76 29.75 A35.5 35.5 0 0 1 29.75 16.76 Z" fill="#ea5a8a"/><path d="M47.5 47.5 L29.75 16.76 A35.5 35.5 0 0 1 47.50 12.00 Z" fill="#f47a9a"/></svg><svg class="a" style="left:36px;top:448px" width="96" height="96" viewBox="0 0 96 96"><rect x="0.5" y="0.5" width="95" height="95" rx="2.5" fill="#fff" stroke="#d2d2d2" stroke-width="1"/><circle cx="48" cy="48" r="40.4" fill="#4d8ee0"/><circle cx="48" cy="28.3" r="5.8" fill="#fff"/><path d="M27.5 36 L48 41 L68.5 36" fill="none" stroke="#fff" stroke-width="4.4" stroke-linecap="round" stroke-linejoin="round"/><path d="M42 40 L54 40 L54.5 55 L41.5 55 Z" fill="#fff"/><path d="M45 53 L38 71.5 M51 53 L58 71.5" fill="none" stroke="#fff" stroke-width="4.4" stroke-linecap="round"/></svg><svg class="a" style="left:196px;top:448px" width="96" height="96" viewBox="0 0 96 96"><rect x="0.5" y="0.5" width="95" height="95" rx="2.5" fill="#fff" stroke="#d2d2d2" stroke-width="1"/><path d="M35 70 h25 l2 17 h8 v3 h-45 v-3 h8 z" fill="#f7f7f7" stroke="#e2e2e2" stroke-width="1"/><rect x="2.5" y="9" width="90" height="60.5" fill="#3b4254"/><rect x="6" y="12.5" width="83" height="53.5" fill="#5294e2"/><path d="M6 28 L44 66 H6 Z" fill="#c9dcf4"/><path d="M13.5 47 L24 57.5 H13.5 Z" fill="#5294e2"/></svg><svg class="a" style="left:356px;top:448px" width="96" height="96" viewBox="0 0 96 96"><rect x="0.5" y="0.5" width="95" height="95" rx="2.5" fill="#fff" stroke="#d2d2d2" stroke-width="1"/><path d="M18 86 C6 86 1 74 3 62 C4 53 8 48 12 46 C12 30 22 22 34 23 C40 14 50 10 60 10 C73 10 80 22 80 38 C88 42 94 52 94 62 L94 86 Z" fill="#fcfcfc" stroke="#e2e2e2" stroke-width="1"/><rect x="64.6" y="56.8" width="30.4" height="29.3" fill="#4b4f5a" opacity="0.85"/><path d="M90.4 71.6 V82.2 H79.2 Z" fill="#fff"/></svg><svg class="a" style="left:516px;top:448px" width="96" height="96" viewBox="0 0 96 96"><rect x="0.5" y="0.5" width="95" height="95" rx="2.5" fill="#fff" stroke="#d2d2d2" stroke-width="1"/><path d="M35 70 h25 l2 17 h8 v3 h-45 v-3 h8 z" fill="#f7f7f7" stroke="#e2e2e2" stroke-width="1"/><rect x="2.5" y="9" width="90" height="60.5" fill="#3b4254"/><rect x="6" y="12.5" width="83" height="53.5" fill="#5294e2"/><path d="M63 12.5 H89 V40 Z" fill="#7a7e92"/><path d="M63 12.5 V40 H89 Z" fill="#f8f8f8"/></svg><svg class="a" style="left:676px;top:448px" width="96" height="96" viewBox="0 0 96 96"><rect x="0.5" y="0.5" width="95" height="95" rx="2.5" fill="#fff" stroke="#d2d2d2" stroke-width="1"/><rect x="17.5" y="2.8" width="56.5" height="89.6" rx="28.2" fill="#4f8fe0"/><path d="M28.5 34.5 L63.7 58.3 L44.6 77.5 V16.8 L63.7 36.3 L28.5 65" fill="none" stroke="#fff" stroke-width="5.2" stroke-linejoin="miter"/><rect x="64.6" y="56.8" width="30.4" height="29.3" fill="#4b4f5a" opacity="0.85"/><path d="M90.4 71.6 V82.2 H79.2 Z" fill="#fff"/></svg><div class="lbl" style="left:4px;top:106px">bluetooth-<br>radio.png</div><div class="lbl cnt" style="left:4px;top:164px">4,2 kB</div><div class="lbl" style="left:164px;top:106px">bluetooth-<br>radio.png</div><div class="lbl cnt" style="left:164px;top:164px">4,2 kB</div><div class="lbl" style="left:324px;top:106px">bt-logo.<br>png</div><div class="lbl cnt" style="left:324px;top:164px">4,2 kB</div><div class="lbl" style="left:484px;top:106px">credentials<br>-<br>preferen…</div><div class="lbl cnt" style="left:484px;top:192px">4,4 kB</div><div class="lbl" style="left:644px;top:106px">cs-<br>bluetooth.<br>png</div><div class="lbl cnt" style="left:644px;top:192px">4,2 kB</div><div class="lbl" style="left:4px;top:326px">gnome-<br>power-<br>manager…</div><div class="lbl cnt" style="left:4px;top:412px">1,7 kB</div><div class="lbl" style="left:164px;top:326px">goa-panel.<br>png</div><div class="lbl cnt" style="left:164px;top:384px">4,4 kB</div><div class="lbl" style="left:324px;top:326px">multimedi<br>a-volume-<br>control.…</div><div class="lbl cnt" style="left:324px;top:412px">6,4 kB</div><div class="lbl" style="left:484px;top:326px">preferenc<br>es-<br>bluetoot…</div><div class="lbl cnt" style="left:484px;top:412px">4,2 kB</div><div class="lbl" style="left:644px;top:326px">preferenc<br>es-color.<br>png</div><div class="lbl cnt" style="left:644px;top:412px">10,1 kB</div><div class="lbl" style="left:4px;top:546px">preferenc</div><div class="lbl" style="left:164px;top:546px">preferenc</div><div class="lbl" style="left:324px;top:546px">preferenc</div><div class="lbl" style="left:484px;top:546px">preferenc</div><div class="lbl" style="left:644px;top:546px">preferenc</div><div class="a" style="left:0;top:1px;width:100%;height:1px;background:repeating-linear-gradient(90deg,#c8c8c8 0 5px,transparent 5px 10px)"></div><div class="a" style="left:0;bottom:1px;width:100%;height:1px;background:repeating-linear-gradient(90deg,#c8c8c8 0 5px,transparent 5px 10px)"></div></div></div><div class="win" style="left:236px;top:120px;width:1027px;height:627px;box-shadow:0 3px 12px rgba(0,0,0,.28)"><div class="hdr" style="background:#2f333f"><div class="a" style="left:187px;top:6px;width:498px;height:37px;background:#3a3e4a;border-radius:2px;box-shadow:inset 0 0 0 1px #2b2e38"></div><div class="a" style="left:187px;top:6px;width:112px;height:37px;background:#5294e2;border-radius:2px 0 0 2px"></div><svg class="a" style="left:196px;top:17px" width="17" height="16"><path d="M8.5 0.2 L0.2 7.8 H2.4 V14.6 H14.6 V7.8 H16.8 L13.4 4.7 V1.3 H11.8 V3.2 Z" fill="#fff"/></svg><div class="pt" style="left:219px;font-weight:bold;color:#fff;letter-spacing:1.2px">Home</div><div class="pt" style="left:308px;color:#c3c8d0;letter-spacing:1.8px">Desktop</div><div class="pt" style="left:434px;color:#c3c8d0">arc-icon-t…e-master</div><svg class="a" style="left:0px;top:0px;" width="1027" height="50" viewBox="0 0 1027 50"><circle cx="19.5" cy="25" r="7.3" fill="#e5727b"/><circle cx="19.5" cy="25" r="7.6" fill="none" stroke="#3a2630" stroke-width="0.6" opacity="0.6"/><path d="M16.9 22.4 L22.1 27.6 M22.1 22.4 L16.9 27.6" stroke="#5b1c22" stroke-width="1.5" stroke-linecap="round"/><rect x="45.8" y="23.8" width="6.6" height="2.6" fill="#c4c9d1"/><path d="M75.8 21.9 h3.6 l-3.6 3.6 z M82.3 28 h-3.6 l3.6 -3.6 z" fill="#c4c9d1"/><rect x="97.2" y="15" width="1" height="20" fill="#4a4e5a"/><path d="M127 19.5 L120.5 25.2 L127 31" fill="none" stroke="#c4c9d1" stroke-width="1.7"/><path d="M157 19.5 L163.5 25.2 L157 31" fill="none" stroke="#868b95" stroke-width="1.7"/><circle cx="910.4" cy="22.8" r="4.6" fill="none" stroke="#c4c9d1" stroke-width="1.9"/><path d="M913.8 26.2 L917.8 30.2" stroke="#c4c9d1" stroke-width="2.6" stroke-linecap="round"/><rect x="952.2" y="20.0" width="2" height="2" fill="#c4c9d1"/><rect x="952.2" y="24.4" width="2" height="2" fill="#c4c9d1"/><rect x="952.2" y="28.8" width="2" height="2" fill="#c4c9d1"/><rect x="956.6" y="20.0" width="2" height="2" fill="#c4c9d1"/><rect x="956.6" y="24.4" width="2" height="2" fill="#c4c9d1"/><rect x="956.6" y="28.8" width="2" height="2" fill="#c4c9d1"/><rect x="961.0" y="20.0" width="2" height="2" fill="#c4c9d1"/><rect x="961.0" y="24.4" width="2" height="2" fill="#c4c9d1"/><rect x="961.0" y="28.8" width="2" height="2" fill="#c4c9d1"/><rect x="996" y="20.5" width="10.5" height="2" fill="#c4c9d1"/><rect x="996" y="24.5" width="10.5" height="2" fill="#c4c9d1"/><rect x="996" y="28.5" width="10.5" height="2" fill="#c4c9d1"/></svg></div><div class="side"><div class="si sel" style="top:4px"><span class="t">Home</span></div><div class="si" style="top:40px"><span class="t">Desktop</span></div><div class="si" style="top:76px"><span class="t">Documents</span></div><div class="si" style="top:112px"><span class="t">Downloads</span></div><div class="si" style="top:148px"><span class="t">Music</span></div><div class="si" style="top:184px"><span class="t">Pictures</span></div><div class="si" style="top:220px"><span class="t">Videos</span></div><div class="si" style="top:256px"><span class="t">Trash</span></div><div class="si" style="top:301px"><span class="t">matric3a…</span></div><div class="si" style="top:346px"><span class="t">Other Loc…</span></div><svg class="a" style="left:0px;top:0px;" width="195" height="400" viewBox="0 0 195 400"><path d="M20 14 L12.2 21 L14.4 21 L14.4 28 L25.7 28 L25.7 21 L27.9 21 L24.7 18.1 L24.7 15 L23.3 15 L23.3 16.8 Z" fill="#fff"/><rect x="13" y="51" width="14" height="12" rx="1" fill="#9ea4ae" transform="translate(0,0)"/><rect x="13" y="52.6" width="14" height="1" fill="#353945"/><path d="M15 86 h6.5 l4 4 v10 h-10.5 z" fill="#9ea4ae"/><path d="M21.5 86 v4 h4" fill="#353945" opacity="0.6"/><path d="M18.6 122 h3.2 v7.5 h3.6 l-5.2 6 l-5.2 -6 h3.6 z" fill="#9ea4ae"/><path d="M16 160 L25.3 158 L25.3 169.3 A2.6 2.3 0 1 1 23.4 167.4 L23.4 161 L17.9 162.2 L17.9 171 A2.6 2.3 0 1 1 16 169 Z" fill="#9ea4ae"/><path d="M12.8 197.5 h3.2 l1.4 -2.5 h5.6 l1.4 2.5 h3.2 v8.8 h-14.8 z" fill="#9ea4ae"/><circle cx="20.2" cy="201.4" r="2.6" fill="#353945"/><rect x="14.5" y="230.5" width="12" height="14.5" fill="none" stroke="#9ea4ae" stroke-width="1.8"/><path d="M17.4 230.5 v14.5 M23.6 230.5 v14.5 M17.4 237.8 h6.2" stroke="#9ea4ae" stroke-width="1.4"/><path d="M13 266.5 h14 M18 265 h4" stroke="#9ea4ae" stroke-width="1.8"/><rect x="14.7" y="269" width="10.6" height="10.6" fill="none" stroke="#9ea4ae" stroke-width="1.8"/><rect x="14" y="310" width="12" height="16" rx="1.5" fill="#9ea4ae"/><path d="M15.8 314.5 h8.4 M15.8 318 h8.4 M15.8 321.5 h8.4" stroke="#353945" stroke-width="1.3"/><path d="M20.2 357.5 v11 M14.7 363 h11" stroke="#9ea4ae" stroke-width="1.6"/></svg></div><div class="cont"><div class="a" style="left:39px;top:29px;width:90px;height:67px;background:#626873;border-radius:1px"><div class="a" style="left:0;top:0;width:90px;height:8.5px;background:#4a4f58"></div><div class="a" style="left:4px;top:3px;width:2px;height:2px;background:#fff"></div></div><svg class="a" style="left:198px;top:19px;" width="92" height="73" viewBox="0 0 92 73"><path d="M4.5 13 V7 H10 V0.5 H39.5 V7 H87.5 V13" fill="#ffffff" stroke="#d6d6d6" stroke-width="1"/><rect x="0" y="13" width="92" height="60" rx="2" fill="#69a3e7"/><rect x="0.5" y="13.5" width="91" height="59" rx="2" fill="none" stroke="#5a94dc" stroke-width="1" opacity="0.7"/><path d="M32 27 h17 l8 8 v24.5 h-25 z" fill="#5289d2" stroke="#4a7fc6" stroke-width="0.8"/><path d="M49 27 v8 h8" fill="#6ea6e8" stroke="#4a7fc6" stroke-width="0.8"/></svg><svg class="a" style="left:358px;top:19px;" width="92" height="73" viewBox="0 0 92 73"><path d="M4.5 13 V7 H10 V0.5 H39.5 V7 H87.5 V13" fill="#ffffff" stroke="#d6d6d6" stroke-width="1"/><rect x="0" y="13" width="92" height="60" rx="2" fill="#69a3e7"/><rect x="0.5" y="13.5" width="91" height="59" rx="2" fill="none" stroke="#5a94dc" stroke-width="1" opacity="0.7"/><path d="M40 27 h11 v14.5 h9 l-14.5 16 l-14.5 -16 h9 z" fill="#5289d2" stroke="#4a7fc6" stroke-width="0.8"/></svg><svg class="a" style="left:518px;top:19px;" width="92" height="73" viewBox="0 0 92 73"><path d="M4.5 13 V7 H10 V0.5 H39.5 V7 H87.5 V13" fill="#ffffff" stroke="#d6d6d6" stroke-width="1"/><rect x="0" y="13" width="92" height="60" rx="2" fill="#69a3e7"/><rect x="0.5" y="13.5" width="91" height="59" rx="2" fill="none" stroke="#5a94dc" stroke-width="1" opacity="0.7"/><path d="M38 53 V31 H61.5 V52" fill="none" stroke="#4a7fc6" stroke-width="1.8"/><rect x="38" y="31" width="23.5" height="6.5" fill="#5289d2"/><ellipse cx="33.3" cy="52.3" rx="5" ry="4.7" fill="#5289d2" stroke="#4a7fc6" stroke-width="0.8"/><ellipse cx="56.3" cy="51.2" rx="5" ry="4.7" fill="#5289d2" stroke="#4a7fc6" stroke-width="0.8"/></svg><svg class="a" style="left:678px;top:19px;" width="92" height="73" viewBox="0 0 92 73"><path d="M4.5 13 V7 H10 V0.5 H39.5 V7 H87.5 V13" fill="#ffffff" stroke="#d6d6d6" stroke-width="1"/><rect x="0" y="13" width="92" height="60" rx="2" fill="#69a3e7"/><rect x="0.5" y="13.5" width="91" height="59" rx="2" fill="none" stroke="#5a94dc" stroke-width="1" opacity="0.7"/></svg><div class="lbl" style="left:4px;top:106px">Desktop</div><div class="lbl cnt" style="left:4px;top:136px">4 items</div><div class="lbl" style="left:164px;top:106px">Document<br>s</div><div class="lbl cnt" style="left:164px;top:164px">9 items</div><div class="lbl" style="left:324px;top:106px">Download<br>s</div><div class="lbl cnt" style="left:324px;top:164px">14 items</div><div class="lbl" style="left:484px;top:106px">Music</div><div class="lbl cnt" style="left:484px;top:136px">0 items</div><div class="lbl" style="left:644px;top:106px">openvpn</div><div class="lbl cnt" style="left:644px;top:136px">7 items</div><svg class="a" style="left:38px;top:211px;" width="92" height="73" viewBox="0 0 92 73"><path d="M4.5 13 V7 H10 V0.5 H39.5 V7 H87.5 V13" fill="#ffffff" stroke="#d6d6d6" stroke-width="1"/><rect x="0" y="13" width="92" height="60" rx="2" fill="#69a3e7"/><rect x="0.5" y="13.5" width="91" height="59" rx="2" fill="none" stroke="#5a94dc" stroke-width="1" opacity="0.7"/><path d="M28 31.5 h8 l2 -3 h16 l2 3 h8 v23 h-36 z" fill="#5289d2" stroke="#4a7fc6" stroke-width="0.8"/><circle cx="46" cy="42" r="6.2" fill="#6ea6e8" stroke="#4a7fc6" stroke-width="0.8"/></svg><svg class="a" style="left:198px;top:211px;" width="92" height="73" viewBox="0 0 92 73"><path d="M4.5 13 V7 H10 V0.5 H39.5 V7 H87.5 V13" fill="#ffffff" stroke="#d6d6d6" stroke-width="1"/><rect x="0" y="13" width="92" height="60" rx="2" fill="#69a3e7"/><rect x="0.5" y="13.5" width="91" height="59" rx="2" fill="none" stroke="#5a94dc" stroke-width="1" opacity="0.7"/></svg><svg class="a" style="left:358px;top:211px;" width="92" height="73" viewBox="0 0 92 73"><path d="M4.5 13 V7 H10 V0.5 H39.5 V7 H87.5 V13" fill="#ffffff" stroke="#d6d6d6" stroke-width="1"/><rect x="0" y="13" width="92" height="60" rx="2" fill="#69a3e7"/><rect x="0.5" y="13.5" width="91" height="59" rx="2" fill="none" stroke="#5a94dc" stroke-width="1" opacity="0.7"/></svg><svg class="a" style="left:518px;top:211px;" width="92" height="73" viewBox="0 0 92 73"><path d="M4.5 13 V7 H10 V0.5 H39.5 V7 H87.5 V13" fill="#ffffff" stroke="#d6d6d6" stroke-width="1"/><rect x="0" y="13" width="92" height="60" rx="2" fill="#69a3e7"/><rect x="0.5" y="13.5" width="91" height="59" rx="2" fill="none" stroke="#5a94dc" stroke-width="1" opacity="0.7"/><rect x="34" y="26" width="24" height="32" fill="#5289d2" stroke="#4a7fc6" stroke-width="0.8"/><rect x="37.5" y="28" width="17" height="13" fill="#6ea6e8" opacity="0.6"/><rect x="37.5" y="43" width="17" height="13" fill="#6ea6e8" opacity="0.6"/></svg><svg class="a" style="left:678px;top:211px;" width="92" height="73" viewBox="0 0 92 73"><path d="M4.5 13 V7 H10 V0.5 H39.5 V7 H87.5 V13" fill="#ffffff" stroke="#d6d6d6" stroke-width="1"/><rect x="0" y="13" width="92" height="60" rx="2" fill="#69a3e7"/><rect x="0.5" y="13.5" width="91" height="59" rx="2" fill="none" stroke="#5a94dc" stroke-width="1" opacity="0.7"/></svg><div class="lbl" style="left:4px;top:298px">Pictures</div><div class="lbl cnt" style="left:4px;top:328px">45 items</div><div class="lbl" style="left:164px;top:298px">snap</div><div class="lbl cnt" style="left:164px;top:328px">0 items</div><div class="lbl" style="left:324px;top:298px">UbuntuPh<br>one</div><div class="lbl cnt" style="left:324px;top:356px">2 items</div><div class="lbl" style="left:484px;top:298px">Videos</div><div class="lbl cnt" style="left:484px;top:328px">0 items</div><div class="lbl" style="left:644px;top:298px">VirtualBox<br>VMs</div><div class="lbl cnt" style="left:644px;top:356px">1 item</div><svg class="a" style="left:48px;top:393px" width="72" height="90"><rect x="0.5" y="0.5" width="71" height="89" fill="#f7f7f7" stroke="#d4d4d4"/><rect x="10" y="17" width="32" height="1" fill="#a9a9a9"/><rect x="10" y="21" width="37" height="1" fill="#a9a9a9"/><rect x="10" y="25" width="18" height="1" fill="#a9a9a9"/><rect x="10" y="29" width="14" height="1" fill="#a9a9a9"/><rect x="10" y="33" width="18" height="1" fill="#a9a9a9"/><rect x="10" y="37" width="34" height="1" fill="#a9a9a9"/><rect x="10" y="41" width="10" height="1" fill="#a9a9a9"/><rect x="10" y="45" width="2" height="1" fill="#a9a9a9"/><rect x="10" y="49" width="32" height="1" fill="#a9a9a9"/><rect x="10" y="53" width="40" height="1" fill="#a9a9a9"/><rect x="10" y="57" width="40" height="1" fill="#a9a9a9"/><rect x="10" y="61" width="42" height="1" fill="#a9a9a9"/><rect x="10" y="65" width="50" height="1" fill="#a9a9a9"/><rect x="10" y="69" width="43" height="1" fill="#a9a9a9"/><rect x="10" y="73" width="52" height="1" fill="#a9a9a9"/></svg><svg class="a" style="left:208px;top:393px" width="72" height="90"><rect x="0.5" y="0.5" width="71" height="89" fill="#f7f7f7" stroke="#d4d4d4"/><rect x="30.2" y="18" width="10" height="10" fill="#dcdcdc" transform="rotate(0 35.2 44.5)"/><rect x="30.2" y="18" width="10" height="10" fill="#dcdcdc" transform="rotate(45 35.2 44.5)"/><rect x="30.2" y="18" width="10" height="10" fill="#dcdcdc" transform="rotate(90 35.2 44.5)"/><rect x="30.2" y="18" width="10" height="10" fill="#dcdcdc" transform="rotate(135 35.2 44.5)"/><rect x="30.2" y="18" width="10" height="10" fill="#dcdcdc" transform="rotate(180 35.2 44.5)"/><rect x="30.2" y="18" width="10" height="10" fill="#dcdcdc" transform="rotate(225 35.2 44.5)"/><rect x="30.2" y="18" width="10" height="10" fill="#dcdcdc" transform="rotate(270 35.2 44.5)"/><rect x="30.2" y="18" width="10" height="10" fill="#dcdcdc" transform="rotate(315 35.2 44.5)"/><circle cx="35.2" cy="44.5" r="20" fill="#dcdcdc"/><circle cx="35.2" cy="44.5" r="9" fill="#f7f7f7"/></svg><div class="lbl" style="left:4px;top:490px">clipdat2.<br>rdf</div><div class="lbl cnt" style="left:4px;top:548px">9,6 kB</div><div class="lbl" style="left:164px;top:490px">xflux</div><div class="lbl cnt" style="left:164px;top:520px">706,0 kB</div><div class="a" style="left:0;bottom:1px;width:100%;height:1px;background:repeating-linear-gradient(90deg,#c8c8c8 0 5px,transparent 5px 10px)"></div></div></div><div class="a" style="left:1172px;top:728px;font-size:30px;font-weight:bold;letter-spacing:2px;color:rgba(200,200,200,0.18);white-space:nowrap">SOFTPEDIA</div><svg class="a" style="left:43px;top:70px;" width="90" height="71" viewBox="0 0 90 71"><path d="M4 13 V6 H10 V0 H38 V6 H86 V13 Z" fill="#fbfdff"/><rect x="0" y="13" width="90" height="58" rx="1" fill="#6ba4e8"/></svg><div class="dl a" style="left:0px;top:156px">arc-icon-<br>theme</div><div class="dl a" style="left:0px;top:214px"><span class="cnt">18 items</span></div><svg class="a" style="left:47px;top:271px" width="82" height="70"><rect width="82" height="70" fill="#cfad6b"/><rect x="16" y="28" width="50" height="12" fill="#e4ca94"/><rect x="41.3" y="0" width="1" height="70" fill="#a8894e"/></svg><div class="dl a" style="left:0px;top:356px">arc-icon-<br>theme-<br>master.zip</div><div class="dl a" style="left:0px;top:442px"><span class="cnt">9,1 MB</span></div><svg class="a" style="left:43px;top:490px;" width="90" height="71" viewBox="0 0 90 71"><path d="M4 13 V6 H10 V0 H38 V6 H86 V13 Z" fill="#fbfdff"/><rect x="0" y="13" width="90" height="58" rx="1" fill="#6ba4e8"/></svg><div class="dl a" style="left:0px;top:576px">arc-icon-<br>theme-<br>master</div><div class="dl a" style="left:0px;top:662px"><span class="cnt">7 items</span></div><div class="a" style="left:0;top:1028px;width:1920px;height:52px;background:linear-gradient(180deg,rgba(10,15,60,0.35) 0px,rgba(0,0,0,0) 4px),linear-gradient(90deg,#1f30aa 0%,#2033ae 50%,#1c2b9a 85%,#1b2890 100%)"></div>
<svg class="a" style="left:0;top:1028px" width="1920" height="52"><path d="M1000 52 Q1200 20 1420 0 M1080 52 Q1300 25 1520 0 M1250 52 Q1400 30 1600 0 M1400 52 Q1500 35 1700 5" fill="none" stroke="#5a7ae8" stroke-width="1" opacity="0.15"/></svg>
<svg class="a" style="left:0;top:1028px" width="760" height="52">
<defs><radialGradient id="ug" cx="26" cy="26" r="17" gradientUnits="userSpaceOnUse"><stop offset="0.55" stop-color="#aab4ee" stop-opacity="0.75"/><stop offset="0.8" stop-color="#7a88e0" stop-opacity="0.45"/><stop offset="1" stop-color="#6a7ad8" stop-opacity="0"/></radialGradient></defs>
<circle cx="26" cy="26" r="17" fill="url(#ug)"/>
<circle cx="26" cy="26" r="10" fill="#ffffff"/>
<circle cx="25.3" cy="26" r="5.1" fill="none" stroke="#151a3a" stroke-width="2.2"/>
<circle cx="18.3" cy="26" r="2.6" fill="#fff"/><circle cx="29.9" cy="19.5" r="2.6" fill="#fff"/><circle cx="29.9" cy="32.5" r="2.6" fill="#fff"/>
<circle cx="18.3" cy="26" r="1.7" fill="#151a3a"/><circle cx="29.9" cy="19.5" r="1.7" fill="#151a3a"/><circle cx="29.9" cy="32.5" r="1.7" fill="#151a3a"/>
<path d="M69.5 1 h6 l-3 4 z" fill="#e8ecff"/>
<path d="M69.5 51 h2 v-3 h-2 z M73.5 51 h2 v-3 h-2z" fill="#e0e4ff"/>
<path d="M117 52 l3 -4 l3 4 z M164 52 l3 -4 l3 4 z" fill="#e0e4ff"/>
</svg>
<!-- files -->
<div class="di" style="left:58px;background:#9b8aa6"><svg width="30" height="30"><path d="M5.5 6 h8 l2 2 h9 v5 h-19z" fill="#f3d9f3"/><path d="M4 11.5 h22 l-1.5 13.5 h-19 z" fill="#f8e4f8"/></svg></div>
<!-- firefox -->
<div class="di" style="left:105px;background:linear-gradient(160deg,#f5a04a,#ef7f30)"><svg width="30" height="30"><circle cx="15" cy="16" r="10.2" fill="#fff6ea"/><path d="M16 5.5 C21 6 25.5 10 25.8 15.5 L21 15 C20.5 12 19 10 16.5 9 Z" fill="#f39445"/><path d="M11.5 11 C15 8.5 20.5 10.5 21 15 C21.5 19.5 17 21.5 13 20.5 C16 19 17.5 16 15.5 13.5 C14.5 12.5 13 12 11.5 12.5 Z" fill="#f08a3a"/><path d="M19.5 8 C21.5 9.5 23 12 23.2 14" fill="none" stroke="#fff" stroke-width="1" opacity="0.7"/></svg></div>
<!-- mail -->
<div class="di" style="left:152px;background:#4f7bd0"><svg width="30" height="30"><rect x="0" y="0" width="30" height="6" fill="#67a4e8"/><rect x="4.5" y="6" width="21" height="18" fill="#f4f4ee"/><path d="M4.5 6 L15 15 L25.5 6" fill="none" stroke="#b5b5b0" stroke-width="0.8"/></svg></div>
<!-- gimp -->
<div class="di" style="left:199px;background:#b8a98a"><svg width="30" height="30"><path d="M7 10 L12 8 L14 12 L19 10 L24 5 L23 14 C22 20 16 22 10 20 C12 17 9 15 5 15 Z" fill="#5a5046"/><circle cx="18" cy="13" r="1.6" fill="#d8d0c0"/><circle cx="22" cy="13" r="1.6" fill="#d8d0c0"/></svg></div>
<!-- camera -->
<div class="di" style="left:246px;background:#4170b8"><svg width="30" height="30"><rect x="13" y="5" width="8" height="2" fill="#e0e8f8"/><rect x="5" y="8.5" width="20" height="14" rx="1" fill="#f4f6fa"/><circle cx="17.5" cy="15.5" r="3.8" fill="none" stroke="#4170b8" stroke-width="1.5"/><rect x="8" y="10.5" width="2" height="1" fill="#4170b8"/></svg></div>
<!-- text editor -->
<div class="di" style="left:293px;background:#9ea3e0"><svg width="30" height="30"><rect x="7" y="5" width="16" height="20" fill="#fafaff"/><path d="M9 9.5 h12 M9 11.5 h12 M9 13.5 h12 M9 15.5 h8" stroke="#9a9aaa" stroke-width="0.8"/></svg></div>
<!-- calculator -->
<div class="di" style="left:340px;background:#4a4d52"><svg width="30" height="30"><rect x="15" y="15" width="15" height="15" fill="#f07a2a"/><path d="M15 0 v30 M0 15 h30" stroke="#3a3c40" stroke-width="1"/><path d="M7.5 4.5 v6 M4.5 7.5 h6 M19 7.5 h6 M5 19 l5 5 M10 19 l-5 5 M19 20.5 h6 M19 23.5 h6" stroke="#f4f4f4" stroke-width="1.5"/></svg></div>
<!-- terminal -->
<div class="di" style="left:387px;background:#2d2f33"><svg width="30" height="30"><text x="4" y="13" font-family="Liberation Mono" font-weight="bold" font-size="10" fill="#f0f0f0">$_</text></svg></div>
<!-- transmission-like red -->
<div class="di" style="left:434px;background:#d8242b"><svg width="30" height="30"><path d="M8 7 h14 v3 h-4 l6 12 h-18 l6 -12 h-4z" fill="#f6f0f0"/><path d="M13 12 h4 v4 h2 l-4 4 l-4 -4 h2z" fill="#d8242b"/></svg></div>
<!-- updown -->
<div class="di" style="left:481px;background:#e8705a"><svg width="30" height="30"><path d="M15 0 v30 M0 15 h30" stroke="#f09a88" stroke-width="0.8"/><path d="M7.5 3 l4 4 h-2.5 v5 h-3 v-5 h-2.5z M22.5 27 l4 -4 h-2.5 v-5 h-3 v5 h-2.5z" fill="#fff"/></svg></div>
<!-- monitor -->
<div class="di" style="left:528px;background:#5fc7f2;border:2px solid #d8f4ff"><svg width="26" height="26"><rect x="0" y="0" width="26" height="26" fill="#3aa0d8"/><path d="M2 15 h4 l3 -7 l3 11 l3 -12 l3 8 h6" fill="none" stroke="#fff" stroke-width="1.4"/></svg></div>
<!-- steam -->
<div class="di" style="left:575px;background:linear-gradient(180deg,#0c2440,#1a6fa0)"><svg width="30" height="30"><circle cx="22" cy="12" r="4" fill="none" stroke="#f0f4f8" stroke-width="2"/><path d="M2 16 L14 21" stroke="#f0f4f8" stroke-width="3"/><circle cx="14" cy="21" r="3" fill="none" stroke="#f0f4f8" stroke-width="1.5"/></svg></div>
<!-- help -->
<div class="di" style="left:622px;background:#a5a5a5;border-radius:2px"><svg width="30" height="30"><text x="8.5" y="23" font-family="Liberation Sans" font-size="22" fill="#7b7b7b">?</text></svg></div>
<!-- workspaces -->
<div class="di" style="left:669px;background:#4aa2ee"><svg width="30" height="30"><rect x="0" y="0" width="15" height="15" fill="#6d6f74"/><path d="M15 0 v30 M0 15 h30" stroke="#9ccaf5" stroke-width="0.8"/><rect x="3" y="3" width="7" height="6" fill="none" stroke="#fff" stroke-width="1"/><rect x="5.5" y="5.5" width="7" height="6" fill="#6d6f74" stroke="#fff" stroke-width="1"/></svg></div>
<!-- dark list -->
<div class="di" style="left:716px;background:#45474f;border-radius:2px"><svg width="30" height="30"><path d="M3 5 h24 M3 10 h24 M3 15 h24 M3 20 h24 M3 25 h24" stroke="#5a5c64" stroke-width="0.8"/></svg></div>
<!-- trash -->
<svg class="a" style="left:1880px;top:1038px" width="28" height="32"><path d="M2 2 h24 l-1.5 29 h-21 z" fill="#6d7382"/><rect x="2" y="1" width="24" height="4" fill="#5d626e"/><path d="M11 14 l3 -4 l3 4 M19 17 l-2 5 h-5 M9 17 l-1.5 4.5 l3 1.5" fill="none" stroke="#f0f0f0" stroke-width="1.6"/></svg>
</body></html>
